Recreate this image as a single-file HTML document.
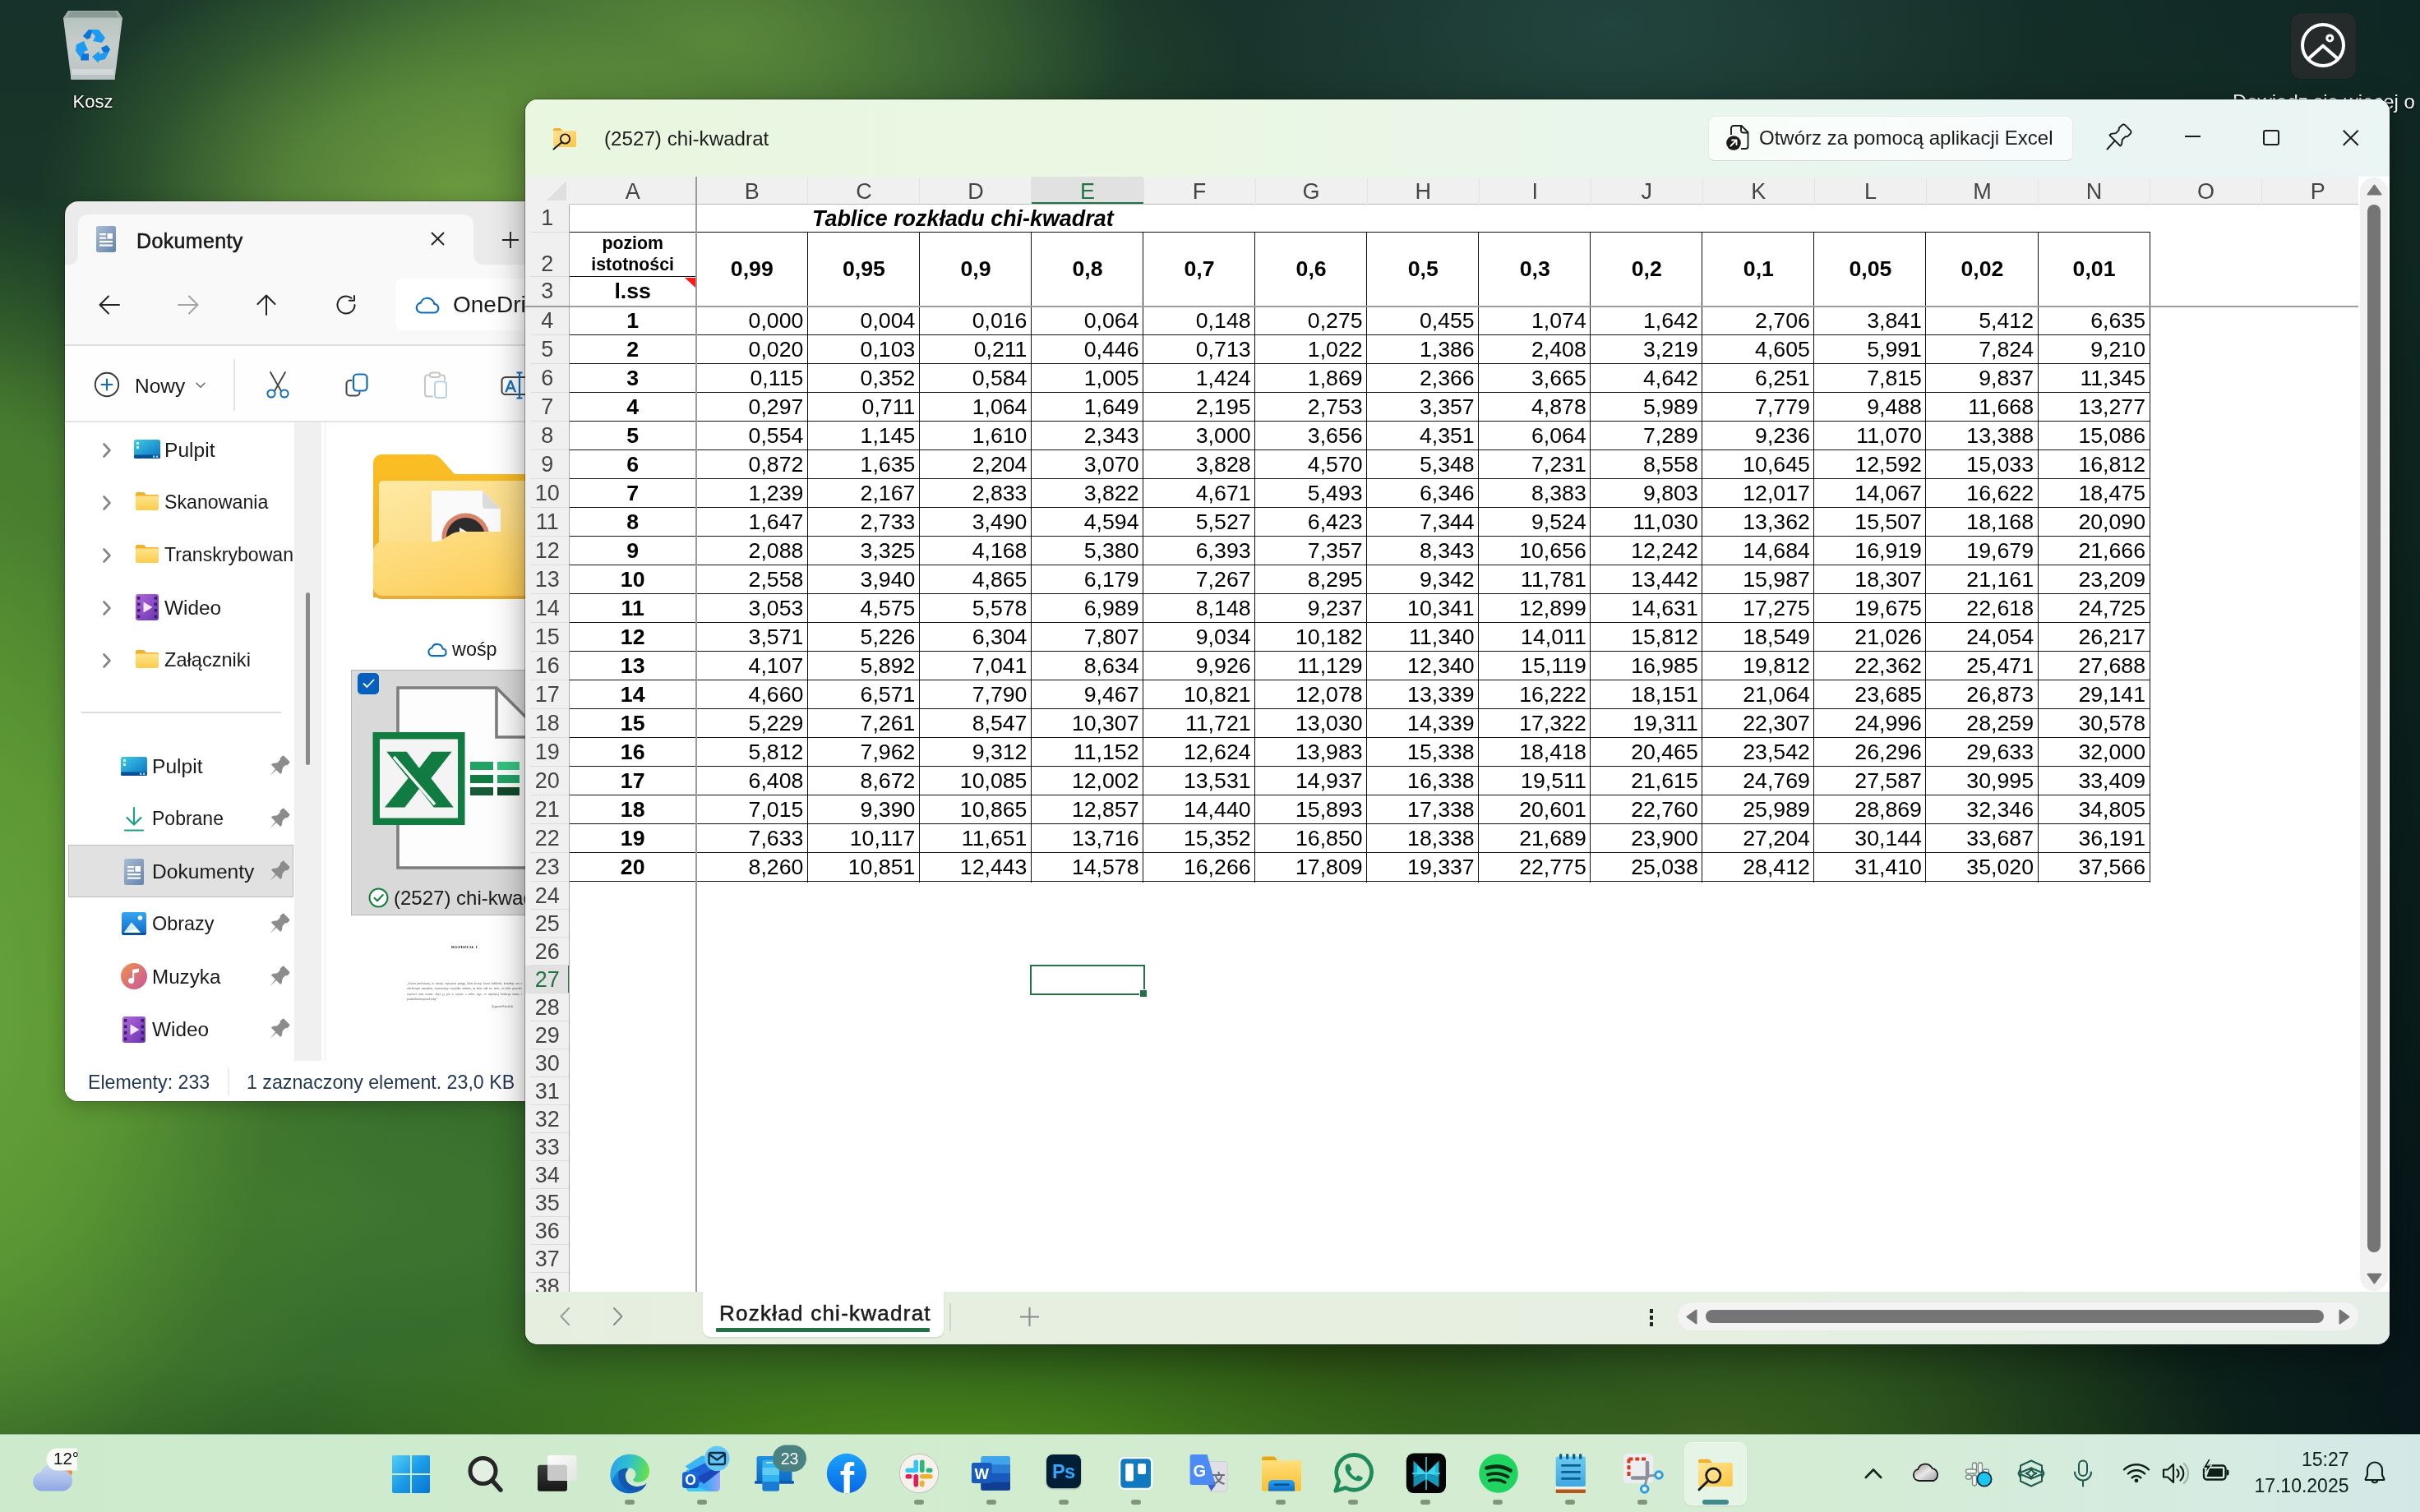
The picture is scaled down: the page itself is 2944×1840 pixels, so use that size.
<!DOCTYPE html>
<html lang="pl"><head><meta charset="utf-8"><title>Pulpit</title>
<style>
*{box-sizing:border-box}
html,body{margin:0;padding:0}
body{width:2944px;height:1840px;overflow:hidden;position:relative;font-family:"Liberation Sans",sans-serif;color:#1b1b1b;
background:
 radial-gradient(ellipse 520px 300px at 560px 230px,rgba(110,156,64,.95) 0%,rgba(100,148,60,.75) 40%,rgba(80,128,54,.3) 75%,rgba(70,118,52,0) 100%),
 radial-gradient(ellipse 500px 250px at 870px 50px,rgba(98,144,60,.85) 0%,rgba(84,130,56,.55) 50%,rgba(70,118,52,0) 100%),
 radial-gradient(ellipse 720px 400px at 800px 100px,rgba(74,122,54,.75) 0%,rgba(62,106,52,.45) 55%,rgba(50,90,50,0) 100%),
 radial-gradient(ellipse 520px 260px at 1960px 30px,rgba(48,88,84,.48) 0%,rgba(44,80,76,.25) 55%,rgba(40,70,66,0) 100%),
 radial-gradient(ellipse 900px 260px at 1150px 1800px,rgba(84,148,24,.95) 0%,rgba(70,128,26,.6) 50%,rgba(50,100,30,0) 100%),
 radial-gradient(ellipse 560px 820px at -80px 1230px,rgba(106,166,60,1) 0%,rgba(94,154,52,.9) 40%,rgba(70,124,44,.45) 75%,rgba(60,110,44,0) 100%),
 radial-gradient(ellipse 460px 560px at -70px 780px,rgba(90,148,54,.92) 0%,rgba(82,138,50,.8) 50%,rgba(70,120,46,.35) 80%,rgba(60,110,44,0) 100%),
 radial-gradient(ellipse 1000px 360px at 380px 1470px,rgba(64,122,50,.95) 0%,rgba(60,116,48,.75) 55%,rgba(50,100,40,0) 100%),
 radial-gradient(ellipse 330px 130px at 1590px 1660px,rgba(34,58,12,.7) 0%,rgba(34,58,12,0) 100%),
 radial-gradient(ellipse 640px 280px at 2080px 1760px,rgba(62,100,30,.85) 0%,rgba(50,84,28,.4) 60%,rgba(40,84,30,0) 100%),
 radial-gradient(ellipse 760px 1300px at 3000px 1560px,rgba(4,14,24,.85) 0%,rgba(4,16,24,.55) 50%,rgba(4,16,24,0) 100%),
 linear-gradient(90deg,rgba(0,0,0,0) 0%,rgba(0,0,0,0) 74%,rgba(8,28,30,.5) 100%),
 linear-gradient(180deg,#16322a 0%,#183826 25%,#23521f 70%,#1e4a1c 100%);
}
.abs{position:absolute}
svg{position:absolute;overflow:visible}
.ui{font-family:"Liberation Sans",sans-serif}
.st{font-size:24px;color:#191919}
.t{position:absolute;white-space:nowrap;line-height:1}
#root{position:absolute;left:0;top:0;width:2944px;height:1840px;will-change:transform}
</style></head><body><div id="root">
<!-- desktop icons -->
<svg style="left:70px;top:8px" width="90" height="96" viewBox="70 8 90 96">
 <defs><linearGradient id="bing" x1="0" y1="0" x2="0" y2="1"><stop offset="0" stop-color="#b3bfba"/><stop offset=".5" stop-color="#c6cecb"/><stop offset="1" stop-color="#bcc4c2"/></linearGradient></defs>
 <path d="M83 13 L143 13 L149 22 L139.5 96.5 L86.5 96.5 L77 22 Z" fill="url(#bing)"/>
 <path d="M83 13 L143 13 L149 22 L77 22 Z" fill="#9fada7"/>
 <path d="M86 14 L140 14 L144 21 L82 21 Z" fill="#8b9a94"/>
 <path d="M88 84 L138 84 L139.5 96.5 L86.5 96.5Z" fill="#d4d7da"/>
 <path d="M87 91 L139 91 L139.5 96.5 L86.5 96.5Z" fill="#bcc2c4"/>
 <g>
  <path d="M101 44 L108 36 L120 36 L128 46 L124 52 L113 50 L116 44 L112 40 L107 47 Z" fill="#1e9bf0"/>
  <path d="M101 44 L108 36 L112 37 L110 46 L106 48 Z" fill="#0d74d6"/>
  <path d="M93 54 L102 50 L107 61 L102 63 L108 73 L100 73 L92 62 Z" fill="#1e9bf0"/>
  <path d="M100 66 L108 65 L108 73.5 L98 73.5 Z" fill="#0d74d6"/>
  <path d="M130 55 L134 60 L128 72 L120 74 L120 77 L112 69 L121 62 L121 66 L126 64 Z" fill="#1e9bf0"/>
  <path d="M123 58 L130 55 L134 60 L131 64 L125 63 Z" fill="#0d74d6"/>
 </g>
</svg>
<div class="t" id="kosz" style="left:63px;top:112.500px;width:100px;text-align:center;font-size:22px;color:#fff;text-shadow:0 1px 3px rgba(0,0,0,.9),0 0 2px rgba(0,0,0,.8)">Kosz</div>

<div class="abs" style="left:2787px;top:15.500px;width:78.500px;height:80px;border-radius:12px;background:#252b2b;box-shadow:0 0 0 1px rgba(20,30,30,.5)"></div>
<svg style="left:2796px;top:25px" width="60" height="60" viewBox="0 0 60 60">
 <defs><clipPath id="spc"><circle cx="30" cy="30" r="25"/></clipPath></defs>
 <circle cx="30" cy="30" r="25" fill="none" stroke="#fff" stroke-width="4"/>
 <path d="M10 48.500 L30 30.700 L50 48.300" fill="none" stroke="#fff" stroke-width="4" stroke-linejoin="round" clip-path="url(#spc)"/>
 <circle cx="38.300" cy="21.400" r="3.500" fill="none" stroke="#fff" stroke-width="3"/>
</svg>
<div class="t" id="dow" style="left:2716px;top:111.500px;font-size:23.900px;color:#fff;text-shadow:0 1px 3px rgba(0,0,0,.9)">Dowiedz się więcej o</div>
<!-- explorer window -->
<div class="abs" id="explorer" style="left:79px;top:245px;width:720px;height:1095px;border-radius:16px;overflow:hidden;background:#ebebeb;box-shadow:0 0 0 1px rgba(0,0,0,.2),0 6px 22px rgba(0,0,0,.22)">
<div class="abs" style="left:-79px;top:-245px;width:2944px;height:1840px">
 <!-- tab + nav area -->
 <svg style="left:79px;top:261px" width="520" height="62" viewBox="79 261 520 62"><path d="M79 322 H83 Q95 322 95 308 V275 Q95 261 109 261 H562 Q576 261 576 275 V308 Q576 322 590 322 H599 V323 H79Z" fill="#f9f9f9"/></svg>
 <div class="abs" style="left:79px;top:322px;width:720px;height:98px;background:#f9f9f9"></div>
 <div class="abs" style="left:79px;top:419px;width:720px;height:2px;background:#dedede"></div>
 <div class="abs" style="left:79px;top:421px;width:720px;height:92px;background:#fefefe"></div>
 <div class="abs" style="left:79px;top:512px;width:720px;height:2px;background:#e2e2e2"></div>
 <div class="abs" style="left:79px;top:514px;width:720px;height:826px;background:#fff"></div>
 <!-- tab content -->
 <svg style="left:117px;top:275px" width="24" height="32" viewBox="0 0 24 32"><defs><linearGradient id="docg" x1="0" y1="0" x2="1" y2="1"><stop offset="0" stop-color="#a9bdd6"/><stop offset="1" stop-color="#6483ab"/></linearGradient></defs><rect width="24" height="32" rx="2.5" fill="url(#docg)"/><g fill="#fff"><rect x="4" y="9" width="8" height="2.2"/><rect x="4" y="13.5" width="8" height="2.2"/><rect x="13.5" y="9" width="6.5" height="6.7"/><rect x="4" y="18" width="16" height="2.2"/><rect x="4" y="22.5" width="16" height="2.2"/></g></svg>
 <div class="t" id="tabt" style="left:166px;top:280.500px;font-size:25px;letter-spacing:.350px;color:#191919;-webkit-text-stroke:.55px #191919">Dokumenty</div>
 <svg style="left:524px;top:282px" width="17" height="17" viewBox="0 0 17 17"><path d="M1 1L16 16M16 1L1 16" stroke="#222" stroke-width="1.9" fill="none"/></svg>
 <svg style="left:611px;top:282px" width="20" height="20" viewBox="0 0 20 20"><path d="M10 0V20M0 10H20" stroke="#222" stroke-width="1.9" fill="none"/></svg>
 <!-- nav buttons -->
 <svg style="left:120px;top:358px" width="26" height="26" viewBox="0 0 26 26"><path d="M25 13H2M12 2.5L1.5 13L12 23.5" stroke="#222" stroke-width="2" fill="none" stroke-linecap="round" stroke-linejoin="round"/></svg>
 <svg style="left:216px;top:358px" width="26" height="26" viewBox="0 0 26 26"><path d="M1 13H24M14 2.5L24.5 13L14 23.5" stroke="#a3a3a3" stroke-width="2" fill="none" stroke-linecap="round" stroke-linejoin="round"/></svg>
 <svg style="left:311px;top:358px" width="26" height="26" viewBox="0 0 26 26"><path d="M13 25V2M2.5 12L13 1.5L23.5 12" stroke="#222" stroke-width="2" fill="none" stroke-linecap="round" stroke-linejoin="round"/></svg>
 <svg style="left:408px;top:358px" width="26" height="26" viewBox="0 0 26 26"><path d="M23.5 13A10.5 10.5 0 1 1 19.5 4.8" stroke="#222" stroke-width="2" fill="none" stroke-linecap="round"/><path d="M14.5 4.6H20.6V-1.2" transform="translate(2.4,3.2)" stroke="#222" stroke-width="2" fill="none" stroke-linecap="round" stroke-linejoin="round"/></svg>
 <div class="abs" style="left:481px;top:339px;width:330px;height:63px;border-radius:9px;background:#fff"></div>
 <svg style="left:505px;top:360px" width="30" height="22" viewBox="0 0 30 22"><path d="M7.5 20.5a6 6 0 0 1 -.8 -11.9a8.6 8.6 0 0 1 16.6 1.2a5.4 5.4 0 0 1 .6 10.7Z" fill="none" stroke="#0f6cbd" stroke-width="2.2" stroke-linejoin="round"/></svg>
 <div class="t" id="oned" style="left:551px;top:357px;font-size:28px;color:#191919">OneDrive</div>
 <!-- toolbar -->
 <svg style="left:114px;top:452px" width="32" height="32" viewBox="0 0 32 32"><circle cx="16" cy="16" r="14.2" fill="none" stroke="#3b3b3b" stroke-width="1.9"/><path d="M16 9.5V22.5M9.5 16H22.5" stroke="#0f6cbd" stroke-width="2" stroke-linecap="round"/></svg>
 <div class="t" id="nowy" style="left:164px;top:458px;font-size:24.500px;color:#191919">Nowy</div>
 <svg style="left:238px;top:465px" width="12" height="8" viewBox="0 0 12 8"><path d="M1 1.2L6 6.2L11 1.2" stroke="#666" stroke-width="1.5" fill="none" stroke-linecap="round" stroke-linejoin="round"/></svg>
 <div class="abs" style="left:284px;top:437px;width:2px;height:63px;background:#e4e4e4"></div>
 <!-- cut -->
 <svg style="left:322px;top:452px" width="32" height="34" viewBox="0 0 32 34"><path d="M7 1L19.5 23M25 1L12.5 23" stroke="#444" stroke-width="1.9" fill="none" stroke-linecap="round"/><circle cx="8" cy="27" r="4.6" fill="none" stroke="#0f6cbd" stroke-width="2"/><circle cx="24" cy="27" r="4.6" fill="none" stroke="#0f6cbd" stroke-width="2"/></svg>
 <!-- copy -->
 <svg style="left:419px;top:454px" width="30" height="30" viewBox="0 0 30 30"><path d="M8.5 9H6.5a4 4 0 0 0 -4 4V23.5a4 4 0 0 0 4 4H14.5a4 4 0 0 0 4 -4V23" fill="none" stroke="#444" stroke-width="2" stroke-linecap="round"/><rect x="11" y="1.5" width="16.5" height="20" rx="4.2" fill="none" stroke="#0f6cbd" stroke-width="2.2"/></svg>
 <!-- paste (disabled) -->
 <svg style="left:515px;top:452px" width="30" height="34" viewBox="0 0 30 34"><path d="M12 30.5H5a3 3 0 0 1 -3 -3V7.5a3 3 0 0 1 3 -3H8M20 4.5h3a3 3 0 0 1 3 3V11" fill="none" stroke="#c6c6c6" stroke-width="2"/><rect x="8" y="1.5" width="12" height="5.5" rx="2.2" fill="none" stroke="#c6c6c6" stroke-width="2"/><rect x="14" y="12.5" width="14" height="19.5" rx="3" fill="#fff" stroke="#b7d3ec" stroke-width="2"/></svg>
 <!-- rename -->
 <svg style="left:609px;top:452px" width="40" height="34" viewBox="0 0 40 34"><rect x="1.5" y="7" width="36" height="21" rx="4.5" fill="none" stroke="#444" stroke-width="2"/><text x="5.500" y="25" font-family="Liberation Sans,sans-serif" font-size="20" fill="#0f6cbd" stroke="#0f6cbd" stroke-width=".5">A</text><path d="M19.500 1.500H26.500M19.500 32.500H26.500M23 1.500V32.500" stroke="#0f6cbd" stroke-width="2.2" fill="none"/><rect x="22" y="5" width="5" height="25" fill="#fff" opacity=".0"/></svg>
 <!-- symbols -->
 <svg width="0" height="0" style="left:0;top:0"><defs>
  <linearGradient id="gdesk" x1="0" y1="0" x2="1" y2="1"><stop offset="0" stop-color="#3ecbe6"/><stop offset="1" stop-color="#0d72c4"/></linearGradient>
  <linearGradient id="gfold" x1="0" y1="0" x2="0" y2="1"><stop offset="0" stop-color="#ffe48c"/><stop offset="1" stop-color="#fbcb4c"/></linearGradient>
  <linearGradient id="gvid" x1="0" y1="0" x2="1" y2="1"><stop offset="0" stop-color="#b06ad8"/><stop offset="1" stop-color="#6a32b4"/></linearGradient>
  <linearGradient id="gpic" x1="0" y1="0" x2="0" y2="1"><stop offset="0" stop-color="#35a6f2"/><stop offset="1" stop-color="#0f67c4"/></linearGradient>
  <linearGradient id="gmus" x1="0" y1="0" x2="1" y2="1"><stop offset="0" stop-color="#f0924e"/><stop offset="1" stop-color="#c8549c"/></linearGradient>
 </defs></svg>
 <!-- tree items -->
 <svg style="left:125px;top:539px" width="10" height="18" viewBox="0 0 10 18"><path d="M1.5 1.5L8.5 9L1.5 16.5" fill="none" stroke="#858585" stroke-width="2.6" stroke-linecap="round" stroke-linejoin="round"/></svg>
 <svg style="left:163px;top:535px" width="32" height="24" viewBox="0 0 32 24"><rect x="0" y="0" width="32" height="22" rx="2.5" fill="url(#gdesk)"/><rect x="0" y="18.5" width="32" height="4.5" rx="1.5" fill="#0b4f94"/><rect x="3" y="3" width="3" height="3" fill="#d9f6ff"/><rect x="3" y="8" width="3" height="3" fill="#d9f6ff"/><rect x="23" y="19.5" width="2.4" height="2.4" fill="#8fd6f4"/><rect x="27" y="19.5" width="2.4" height="2.4" fill="#8fd6f4"/></svg>
 <div class="t st" style="left:200px;top:536px;font-size:24.6px">Pulpit</div>
 <svg style="left:125px;top:603px" width="10" height="18" viewBox="0 0 10 18"><path d="M1.5 1.5L8.5 9L1.5 16.5" fill="none" stroke="#858585" stroke-width="2.6" stroke-linecap="round" stroke-linejoin="round"/></svg>
 <svg style="left:164px;top:598px" width="30" height="24" viewBox="0 0 30 24"><path d="M1 3a2 2 0 0 1 2 -2h8l3 3h13a2 2 0 0 1 2 2v3H1Z" fill="#f2b02c"/><rect x="1" y="5.5" width="28" height="17.5" rx="2" fill="url(#gfold)"/></svg>
 <div class="t st" style="left:200px;top:600px;font-size:23.2px">Skanowania</div>
 <svg style="left:125px;top:667px" width="10" height="18" viewBox="0 0 10 18"><path d="M1.5 1.5L8.5 9L1.5 16.5" fill="none" stroke="#858585" stroke-width="2.6" stroke-linecap="round" stroke-linejoin="round"/></svg>
 <svg style="left:164px;top:662px" width="30" height="24" viewBox="0 0 30 24"><path d="M1 3a2 2 0 0 1 2 -2h8l3 3h13a2 2 0 0 1 2 2v3H1Z" fill="#f2b02c"/><rect x="1" y="5.5" width="28" height="17.5" rx="2" fill="url(#gfold)"/></svg>
 <div class="t st" style="left:200px;top:664px;font-size:23.1px">Transkrybowane</div>
 <svg style="left:125px;top:731px" width="10" height="18" viewBox="0 0 10 18"><path d="M1.5 1.5L8.5 9L1.5 16.5" fill="none" stroke="#858585" stroke-width="2.6" stroke-linecap="round" stroke-linejoin="round"/></svg>
 <svg style="left:165px;top:723px" width="28" height="32" viewBox="0 0 28 32"><rect x="0" y="0" width="28" height="32" rx="3" fill="url(#gvid)"/><g fill="#3c1a78"><rect x="2" y="3" width="3.4" height="3.6"/><rect x="2" y="10.5" width="3.4" height="3.6"/><rect x="2" y="18" width="3.4" height="3.6"/><rect x="2" y="25.5" width="3.4" height="3.6"/><rect x="22.6" y="3" width="3.4" height="3.6"/><rect x="22.6" y="10.5" width="3.4" height="3.6"/><rect x="22.6" y="18" width="3.4" height="3.6"/><rect x="22.6" y="25.5" width="3.4" height="3.6"/></g><path d="M9.5 9.5L20.5 16L9.5 22.5Z" fill="#f3e6ff"/></svg>
 <div class="t st" style="left:200px;top:728px;font-size:24.4px">Wideo</div>
 <svg style="left:125px;top:795px" width="10" height="18" viewBox="0 0 10 18"><path d="M1.5 1.5L8.5 9L1.5 16.5" fill="none" stroke="#858585" stroke-width="2.6" stroke-linecap="round" stroke-linejoin="round"/></svg>
 <svg style="left:164px;top:790px" width="30" height="24" viewBox="0 0 30 24"><path d="M1 3a2 2 0 0 1 2 -2h8l3 3h13a2 2 0 0 1 2 2v3H1Z" fill="#f2b02c"/><rect x="1" y="5.5" width="28" height="17.5" rx="2" fill="url(#gfold)"/></svg>
 <div class="t st" style="left:200px;top:792px;font-size:23.6px">Załączniki</div>
 <div class="abs" style="left:99px;top:866px;width:243px;height:2px;background:#dcdcdc"></div>
 <!-- quick access -->
 <div class="abs" style="left:83px;top:1028px;width:274px;height:64px;background:#e1e1e1;border:1px solid #bdbdbd"></div>
 <svg style="left:147px;top:921px" width="32" height="24" viewBox="0 0 32 24"><rect x="0" y="0" width="32" height="22" rx="2.5" fill="url(#gdesk)"/><rect x="0" y="18.5" width="32" height="4.5" rx="1.5" fill="#0b4f94"/><rect x="3" y="3" width="3" height="3" fill="#d9f6ff"/><rect x="3" y="8" width="3" height="3" fill="#d9f6ff"/><rect x="23" y="19.5" width="2.4" height="2.4" fill="#8fd6f4"/><rect x="27" y="19.5" width="2.4" height="2.4" fill="#8fd6f4"/></svg>
 <div class="t st" style="left:185px;top:921px;font-size:24.6px">Pulpit</div>
 <svg style="left:151px;top:982px" width="24" height="30" viewBox="0 0 24 30"><path d="M12 1V21M3.5 13L12 21.5L20.5 13M1 28.5H23" fill="none" stroke="#1aa08c" stroke-width="2.2" stroke-linecap="round" stroke-linejoin="round"/></svg>
 <div class="t st" style="left:185px;top:985px;font-size:23px">Pobrane</div>
 <svg style="left:151px;top:1045px" width="24" height="32" viewBox="0 0 24 32"><rect width="24" height="32" rx="2.5" fill="url(#docg)"/><g fill="#fff"><rect x="4" y="9" width="8" height="2.2"/><rect x="4" y="13.5" width="8" height="2.2"/><rect x="13.5" y="9" width="6.5" height="6.7"/><rect x="4" y="18" width="16" height="2.2"/><rect x="4" y="22.5" width="16" height="2.2"/></g></svg>
 <div class="t st" style="left:185px;top:1049px;font-size:24.6px">Dokumenty</div>
 <svg style="left:148px;top:1110px" width="30" height="28" viewBox="0 0 30 28"><rect width="30" height="28" rx="3" fill="url(#gpic)"/><circle cx="22.5" cy="7" r="2.8" fill="#fff"/><path d="M2 26L12 12.5L24 26Z" fill="#fff"/><path d="M2 26L12 12.5L18 20Z" fill="#d5ecff"/><path d="M0 25h30v0a3 3 0 0 1 -3 3H3a3 3 0 0 1 -3 -3Z" fill="#0b4f94"/></svg>
 <div class="t st" style="left:185px;top:1113px;font-size:23.4px">Obrazy</div>
 <svg style="left:147px;top:1172px" width="32" height="32" viewBox="0 0 32 32"><circle cx="16" cy="16" r="16" fill="url(#gmus)"/><path d="M14 8L22 6.5V11L16.2 12.2V21.5a3.6 3.6 0 1 1 -2.2 -3.3Z" fill="#fff"/></svg>
 <div class="t st" style="left:185px;top:1177px;font-size:24.2px">Muzyka</div>
 <svg style="left:149px;top:1237px" width="28" height="32" viewBox="0 0 28 32"><rect x="0" y="0" width="28" height="32" rx="3" fill="url(#gvid)"/><g fill="#3c1a78"><rect x="2" y="3" width="3.4" height="3.6"/><rect x="2" y="10.5" width="3.4" height="3.6"/><rect x="2" y="18" width="3.4" height="3.6"/><rect x="2" y="25.5" width="3.4" height="3.6"/><rect x="22.6" y="3" width="3.4" height="3.6"/><rect x="22.6" y="10.5" width="3.4" height="3.6"/><rect x="22.6" y="18" width="3.4" height="3.6"/><rect x="22.6" y="25.5" width="3.4" height="3.6"/></g><path d="M9.5 9.5L20.5 16L9.5 22.5Z" fill="#f3e6ff"/></svg>
 <div class="t st" style="left:185px;top:1241px;font-size:24.4px">Wideo</div>
 <svg style="left:327px;top:919px" width="26" height="26" viewBox="0 0 26 26"><path d="M16.200 1.300a1.800 1.800 0 0 1 2.600 0l6 6a1.800 1.800 0 0 1 0 2.600l-2.400 2.400h-2.300l-3.400 3.400l-.900 5.600l-1.700 1.700l-5 -5L1.500 25L8 16.800l-5 -5l1.700 -1.700l5.600 -.900l3.400 -3.400V3.700Z" fill="#8c8c8c"/></svg>
 <svg style="left:327px;top:983px" width="26" height="26" viewBox="0 0 26 26"><path d="M16.200 1.300a1.800 1.800 0 0 1 2.600 0l6 6a1.800 1.800 0 0 1 0 2.600l-2.400 2.400h-2.300l-3.400 3.400l-.900 5.600l-1.700 1.700l-5 -5L1.500 25L8 16.800l-5 -5l1.700 -1.700l5.600 -.900l3.400 -3.400V3.700Z" fill="#8c8c8c"/></svg>
 <svg style="left:327px;top:1047px" width="26" height="26" viewBox="0 0 26 26"><path d="M16.200 1.300a1.800 1.800 0 0 1 2.600 0l6 6a1.800 1.800 0 0 1 0 2.600l-2.400 2.400h-2.300l-3.400 3.400l-.900 5.600l-1.700 1.700l-5 -5L1.500 25L8 16.800l-5 -5l1.700 -1.700l5.600 -.900l3.400 -3.400V3.700Z" fill="#8c8c8c"/></svg>
 <svg style="left:327px;top:1111px" width="26" height="26" viewBox="0 0 26 26"><path d="M16.200 1.300a1.800 1.800 0 0 1 2.600 0l6 6a1.800 1.800 0 0 1 0 2.600l-2.400 2.400h-2.300l-3.400 3.400l-.900 5.600l-1.700 1.700l-5 -5L1.500 25L8 16.800l-5 -5l1.700 -1.700l5.600 -.900l3.400 -3.400V3.700Z" fill="#8c8c8c"/></svg>
 <svg style="left:327px;top:1175px" width="26" height="26" viewBox="0 0 26 26"><path d="M16.200 1.300a1.800 1.800 0 0 1 2.600 0l6 6a1.800 1.800 0 0 1 0 2.600l-2.400 2.400h-2.300l-3.400 3.400l-.900 5.600l-1.700 1.700l-5 -5L1.500 25L8 16.800l-5 -5l1.700 -1.700l5.600 -.900l3.400 -3.400V3.700Z" fill="#8c8c8c"/></svg>
 <svg style="left:327px;top:1239px" width="26" height="26" viewBox="0 0 26 26"><path d="M16.200 1.300a1.800 1.800 0 0 1 2.600 0l6 6a1.800 1.800 0 0 1 0 2.600l-2.400 2.400h-2.300l-3.400 3.400l-.900 5.600l-1.700 1.700l-5 -5L1.500 25L8 16.800l-5 -5l1.700 -1.700l5.600 -.900l3.400 -3.400V3.700Z" fill="#8c8c8c"/></svg>
 <!-- sidebar strip -->
 <div class="abs" style="left:358px;top:514px;width:33px;height:777px;background:#f0f0f0"></div>
 <div class="abs" style="left:395px;top:514px;width:1px;height:777px;background:#ececec"></div>
 <div class="abs" style="left:372px;top:721px;width:5px;height:210px;border-radius:3px;background:#8b8b8b"></div>
 <!-- content: big folder -->
 <svg style="left:454px;top:552px" width="260" height="180" viewBox="454 552 260 180">
  <defs>
   <linearGradient id="bf1" x1="0" y1="0" x2="0" y2="1"><stop offset="0" stop-color="#fbbf24"/><stop offset="1" stop-color="#eaa928"/></linearGradient>
   <linearGradient id="bf2" x1="0" y1="0" x2="1" y2="1"><stop offset="0" stop-color="#ffe9a4"/><stop offset="1" stop-color="#f7cd62"/></linearGradient>
   <linearGradient id="bf3" x1="0" y1="0" x2="1" y2="1"><stop offset="0" stop-color="#ffe08a"/><stop offset="1" stop-color="#fbc94c"/></linearGradient>
   <linearGradient id="bfp" x1="0" y1="0" x2="1" y2="1"><stop offset="0" stop-color="#8a4b3a"/><stop offset="1" stop-color="#2a2a2a"/></linearGradient>
  </defs>
  <path d="M454 563 a10 10 0 0 1 10 -10 h60 q8 0 13 6 l16 18 h160 v150 h-259 Z" fill="url(#bf1)"/>
  <rect x="461" y="585" width="260" height="130" rx="5" fill="url(#bf2)"/>
  <path d="M525 597 h62 l22 22 v60 h-84 Z" fill="#fafafa"/>
  <path d="M587 597 l22 22 h-18 a4 4 0 0 1 -4 -4 Z" fill="#dcdcdc"/>
  <circle cx="566.500" cy="653.500" r="29" fill="#d9826a"/><circle cx="566.500" cy="653.500" r="23.500" fill="#2c2c2c"/>
  <path d="M559 642 L577 652 L559 662Z" fill="#eee"/>
  <path d="M454 671 a12 12 0 0 1 12 -12 h62 q8 0 13 -4 l8 -5 q5 -3 12 -3 h160 v82 h-257 a10 10 0 0 1 -10 -10 Z" fill="url(#bf3)"/>
  <path d="M454 716 v3 a10 10 0 0 0 10 10 h257 v-4 h-255 a11 11 0 0 1 -12 -9Z" fill="#e8ad35"/>
 </svg>
 <svg style="left:520px;top:781px" width="24" height="19" viewBox="0 0 30 22"><path d="M7.500 20.500a6 6 0 0 1 -.8 -11.900a8.600 8.600 0 0 1 16.600 1.200a5.400 5.400 0 0 1 .6 10.700Z" fill="none" stroke="#0f6cbd" stroke-width="2.600" stroke-linejoin="round"/></svg>
 <div class="t st" id="wosp" style="left:550px;top:779px;font-size:23.400px">wośp</div>
 <!-- selected item -->
 <div class="abs" style="left:427px;top:815px;width:320px;height:299px;background:#d9d9d9;border:1px solid #b4b4b4"></div>
 <div class="abs" style="left:435px;top:819px;width:26px;height:26px;border-radius:5px;background:#0560c0"></div>
 <svg style="left:441px;top:826px" width="15" height="12" viewBox="0 0 15 12"><path d="M1.500 6L5.500 10L13.500 1.500" fill="none" stroke="#fff" stroke-width="1.800" stroke-linecap="round" stroke-linejoin="round"/></svg>
 <svg style="left:450px;top:833px" width="260" height="230" viewBox="450 833 260 230">
  <path d="M484 837 h120 l60 60 v159 h-180 Z" fill="#fdfdfd" stroke="#7d7d7d" stroke-width="3.600"/>
  <path d="M604 837 v60 h60" fill="none" stroke="#7d7d7d" stroke-width="3.600"/>
  <rect x="453.500" y="891" width="112" height="113" fill="#107c41"/>
  <rect x="462" y="899.500" width="95" height="96" fill="#f4f4f4"/>
  <text transform="translate(510 979.500) scale(1.240 1)" text-anchor="middle" font-family="Liberation Sans,sans-serif" font-weight="bold" font-size="90" fill="#107c41" stroke="#107c41" stroke-width="5" stroke-linejoin="miter">X</text>
  <path d="M479 921 l50 58" stroke="#f4f4f4" stroke-width="3.500" fill="none"/>
  <g><rect x="572" y="927" width="28" height="10" fill="#21a366"/><rect x="605" y="927" width="27" height="10" fill="#33c481"/><rect x="572" y="943" width="28" height="10" fill="#107c41"/><rect x="605" y="943" width="27" height="10" fill="#21a366"/><rect x="572" y="958" width="28" height="10" fill="#185c37"/><rect x="605" y="958" width="27" height="10" fill="#134a2c"/></g>
 </svg>
 <svg style="left:448px;top:1080px" width="25" height="25" viewBox="0 0 25 25"><circle cx="12.500" cy="12.500" r="11" fill="#fff" stroke="#15803d" stroke-width="2"/><path d="M7.500 12.800L11 16.300L17.800 9" fill="none" stroke="#15803d" stroke-width="2" stroke-linecap="round" stroke-linejoin="round"/></svg>
 <div class="t st" id="fname" style="left:479px;top:1081px">(2527) chi-kwadrat</div>
 <!-- doc thumbnail -->
 <div class="t" style="left:549px;top:1150px;font-family:'Liberation Serif',serif;font-size:5px;font-weight:bold;color:#222;letter-spacing:.2px">ROZDZIAŁ I</div>
 <div class="abs" style="left:495px;top:1194px;width:140px;font-family:'Liberation Serif',serif;font-size:3.400px;line-height:6.300px;color:#555;text-align:justify;white-space:normal">„Jestem przekonany, że istnieje najwyższa potęga, która kieruje losem ludzkości, kształtuje nas z określonym zamysłem, wyznaczając wszystkie zadania, na które nikt nie może, na które przyszło wywrzeć nasz rozum. Abyś ją jest w wyższe z siebie tego, co najwięcej boskiego mamy i postawiłaniem przed sobą”</div>
 <div class="t" style="left:598px;top:1224px;font-family:'Liberation Serif',serif;font-size:3.400px;color:#555">Zygmunt Krasiński</div>
 <!-- status bar -->
 <div class="abs" style="left:79px;top:1291px;width:720px;height:49px;background:#fff"></div>
 <div class="t" id="st1" style="left:107px;top:1306px;font-size:23.200px;color:#1f3550">Elementy: 233</div>
 <div class="abs" style="left:277px;top:1299px;width:2px;height:34px;background:#ececec"></div>
 <div class="t" id="st2" style="left:300px;top:1306px;font-size:23.200px;color:#1f3550">1 zaznaczony element. 23,0 KB</div>
</div></div>

<!-- sheet preview window -->
<div class="abs" id="peek" style="left:639px;top:120.5px;width:2268px;height:1515.5px;border-radius:15px;overflow:hidden;background:#fff;box-shadow:0 0 0 1px rgba(0,0,0,.3),0 3px 12px rgba(0,0,0,.1),0 14px 40px 4px rgba(0,0,0,.3)">
<div class="abs" style="left:-639px;top:-120.5px;width:2944px;height:1840px">
<div class="abs" style="left:639px;top:120.5px;width:2268px;height:94.5px;background:linear-gradient(90deg,#e9f7e1 0%,#e9f7e3 35%,#e9f6ec 60%,#e9f5f2 80%,#eaf5f4 100%)"></div>
<svg style="left:671px;top:155px" width="32" height="28" viewBox="0 0 32 28"><defs><linearGradient id="pkf" x1="0" y1="0" x2="1" y2="1"><stop offset="0" stop-color="#ffe394"/><stop offset="1" stop-color="#fbc53e"/></linearGradient></defs><path d="M2 3a2 2 0 0 1 2 -2h6.500l3 3.200H2Z" fill="#f2b02c"/><path d="M2 4.200h26a2 2 0 0 1 2 2v15.800a2 2 0 0 1 -2 2H4a2 2 0 0 1 -2 -2Z" fill="url(#pkf)"/><circle cx="16.500" cy="14" r="5.600" fill="#ffe9a8" fill-opacity=".5" stroke="#1a1a1a" stroke-width="1.900"/><path d="M12.600 18L2.500 26.500" stroke="#1a1a1a" stroke-width="2.100" stroke-linecap="round"/></svg>
<div class="t" id="ptitle" style="left:735px;top:157px;font-size:24.200px;color:#1b1b1b">(2527) chi-kwadrat</div>
<div class="abs" style="left:2077.500px;top:140.500px;width:444px;height:55px;border-radius:8px;background:rgba(255,255,255,.72);border:1px solid rgba(0,0,0,.07);border-bottom-color:rgba(0,0,0,.16)"></div>
<svg style="left:2099px;top:151px" width="30" height="32" viewBox="0 0 30 32"><path d="M7 13V5a3 3 0 0 1 3 -3h9.500l8 8V27a3 3 0 0 1 -3 3H19" fill="none" stroke="#1b1b1b" stroke-width="1.900" stroke-linejoin="round"/><path d="M19 2.500V8a2.500 2.500 0 0 0 2.500 2.500H27.500" fill="none" stroke="#1b1b1b" stroke-width="1.900"/><circle cx="10" cy="23" r="8.800" fill="#1b1b1b"/><path d="M6.500 26.500L13.300 19.700M8 19.500H13.500V25" fill="none" stroke="#fff" stroke-width="1.900" stroke-linecap="round" stroke-linejoin="round"/></svg>
<div class="t" id="openw" style="left:2140px;top:156.400px;font-size:24px;color:#1b1b1b">Otwórz za pomocą aplikacji Excel</div>
<svg style="left:2562px;top:150px" width="33" height="34" viewBox="0 0 33 34"><path d="M19.500 2.200a2.600 2.600 0 0 1 3.700 0l6.600 6.600a2.600 2.600 0 0 1 0 3.700l-3.100 3.100a2 2 0 0 1 -1.400 .6h-1.700l-3.800 3.800l-.8 5.800l-1.700 1.700L4.400 14.600l1.700 -1.700l5.800 -.8l3.800 -3.800V6.600a2 2 0 0 1 .6 -1.400Z" fill="none" stroke="#1b1b1b" stroke-width="1.900" stroke-linejoin="round"/><path d="M10.900 21.100L1.500 31.500" stroke="#1b1b1b" stroke-width="1.900" stroke-linecap="round"/></svg>
<div class="abs" style="left:2657.500px;top:165px;width:19.500px;height:2px;background:#1b1b1b"></div>
<div class="abs" style="left:2753px;top:157.500px;width:20px;height:19.500px;border:2px solid #1b1b1b;border-radius:3px"></div>
<svg style="left:2849.500px;top:157.500px" width="19.500" height="19.500" viewBox="0 0 19.500 19.500"><path d="M.8 .8L18.700 18.700M18.700 .8L.8 18.700" stroke="#1b1b1b" stroke-width="2" fill="none"/></svg>
<div class="abs" style="left:639px;top:215px;width:2229.5px;height:33.5px;background:#f0f0f0"></div>
<div class="abs" style="left:639px;top:248.5px;width:53.5px;height:1323.0px;background:#f0f0f0"></div>
<svg style="left:663.500px;top:219px" width="26" height="26" viewBox="0 0 26 26"><path d="M25 1V25H1Z" fill="#dfdfdf"/></svg>
<div class="abs" style="left:1254.98px;top:215px;width:136.06px;height:33.5px;background:#e1e1e1;border-bottom:3px solid #217346"></div>
<div class="abs" style="left:692.5px;top:247.5px;width:2176.0px;height:1.500px;background:#b9b9b9"></div>
<div class="t ch" style="left:692.5px;width:154.29999999999995px;top:219.8px">A</div>
<div class="t ch" style="left:846.8px;width:136.06px;top:219.8px;color:#444">B</div>
<div class="t ch" style="left:982.8599999999999px;width:136.06px;top:219.8px;color:#444">C</div>
<div class="abs" style="left:982.3599999999999px;top:217px;width:1px;height:31.5px;background:#e2e2e2"></div>
<div class="t ch" style="left:1118.92px;width:136.06px;top:219.8px;color:#444">D</div>
<div class="abs" style="left:1118.42px;top:217px;width:1px;height:31.5px;background:#e2e2e2"></div>
<div class="t ch" style="left:1254.98px;width:136.06px;top:219.8px;color:#217346">E</div>
<div class="abs" style="left:1254.48px;top:217px;width:1px;height:31.5px;background:#e2e2e2"></div>
<div class="t ch" style="left:1391.04px;width:136.06px;top:219.8px;color:#444">F</div>
<div class="abs" style="left:1390.54px;top:217px;width:1px;height:31.5px;background:#e2e2e2"></div>
<div class="t ch" style="left:1527.1px;width:136.06px;top:219.8px;color:#444">G</div>
<div class="abs" style="left:1526.6px;top:217px;width:1px;height:31.5px;background:#e2e2e2"></div>
<div class="t ch" style="left:1663.1599999999999px;width:136.06px;top:219.8px;color:#444">H</div>
<div class="abs" style="left:1662.6599999999999px;top:217px;width:1px;height:31.5px;background:#e2e2e2"></div>
<div class="t ch" style="left:1799.22px;width:136.06px;top:219.8px;color:#444">I</div>
<div class="abs" style="left:1798.72px;top:217px;width:1px;height:31.5px;background:#e2e2e2"></div>
<div class="t ch" style="left:1935.28px;width:136.06px;top:219.8px;color:#444">J</div>
<div class="abs" style="left:1934.78px;top:217px;width:1px;height:31.5px;background:#e2e2e2"></div>
<div class="t ch" style="left:2071.34px;width:136.06px;top:219.8px;color:#444">K</div>
<div class="abs" style="left:2070.84px;top:217px;width:1px;height:31.5px;background:#e2e2e2"></div>
<div class="t ch" style="left:2207.3999999999996px;width:136.06px;top:219.8px;color:#444">L</div>
<div class="abs" style="left:2206.8999999999996px;top:217px;width:1px;height:31.5px;background:#e2e2e2"></div>
<div class="t ch" style="left:2343.46px;width:136.06px;top:219.8px;color:#444">M</div>
<div class="abs" style="left:2342.96px;top:217px;width:1px;height:31.5px;background:#e2e2e2"></div>
<div class="t ch" style="left:2479.52px;width:136.06px;top:219.8px;color:#444">N</div>
<div class="abs" style="left:2479.02px;top:217px;width:1px;height:31.5px;background:#e2e2e2"></div>
<div class="t ch" style="left:2615.58px;width:136.06px;top:219.8px;color:#444">O</div>
<div class="abs" style="left:2615.08px;top:217px;width:1px;height:31.5px;background:#e2e2e2"></div>
<div class="t ch" style="left:2751.6400000000003px;width:136.06px;top:219.8px;color:#444">P</div>
<div class="abs" style="left:2751.1400000000003px;top:217px;width:1px;height:31.5px;background:#e2e2e2"></div>
<div class="t rh" style="left:639px;width:53.5px;top:252.1px;color:#444">1</div>
<div class="abs" style="left:645px;top:282px;width:47.5px;height:1px;background:#dcdcdc"></div>
<div class="t rh" style="left:639px;width:53.5px;top:307.7px;color:#444">2</div>
<div class="abs" style="left:645px;top:336px;width:47.5px;height:1px;background:#dcdcdc"></div>
<div class="t rh" style="left:639px;width:53.5px;top:340.6px;color:#444">3</div>
<div class="abs" style="left:645px;top:372px;width:47.5px;height:1px;background:#dcdcdc"></div>
<div class="t rh" style="left:639px;width:53.5px;top:376.6px;color:#444">4</div>
<div class="abs" style="left:645px;top:407px;width:47.5px;height:1px;background:#dcdcdc"></div>
<div class="t rh" style="left:639px;width:53.5px;top:411.6px;color:#444">5</div>
<div class="abs" style="left:645px;top:442px;width:47.5px;height:1px;background:#dcdcdc"></div>
<div class="t rh" style="left:639px;width:53.5px;top:446.6px;color:#444">6</div>
<div class="abs" style="left:645px;top:477px;width:47.5px;height:1px;background:#dcdcdc"></div>
<div class="t rh" style="left:639px;width:53.5px;top:481.6px;color:#444">7</div>
<div class="abs" style="left:645px;top:512px;width:47.5px;height:1px;background:#dcdcdc"></div>
<div class="t rh" style="left:639px;width:53.5px;top:516.6px;color:#444">8</div>
<div class="abs" style="left:645px;top:547px;width:47.5px;height:1px;background:#dcdcdc"></div>
<div class="t rh" style="left:639px;width:53.5px;top:551.6px;color:#444">9</div>
<div class="abs" style="left:645px;top:582px;width:47.5px;height:1px;background:#dcdcdc"></div>
<div class="t rh" style="left:639px;width:53.5px;top:586.6px;color:#444">10</div>
<div class="abs" style="left:645px;top:617px;width:47.5px;height:1px;background:#dcdcdc"></div>
<div class="t rh" style="left:639px;width:53.5px;top:621.6px;color:#444">11</div>
<div class="abs" style="left:645px;top:652px;width:47.5px;height:1px;background:#dcdcdc"></div>
<div class="t rh" style="left:639px;width:53.5px;top:656.6px;color:#444">12</div>
<div class="abs" style="left:645px;top:687px;width:47.5px;height:1px;background:#dcdcdc"></div>
<div class="t rh" style="left:639px;width:53.5px;top:691.6px;color:#444">13</div>
<div class="abs" style="left:645px;top:722px;width:47.5px;height:1px;background:#dcdcdc"></div>
<div class="t rh" style="left:639px;width:53.5px;top:726.6px;color:#444">14</div>
<div class="abs" style="left:645px;top:757px;width:47.5px;height:1px;background:#dcdcdc"></div>
<div class="t rh" style="left:639px;width:53.5px;top:761.6px;color:#444">15</div>
<div class="abs" style="left:645px;top:792px;width:47.5px;height:1px;background:#dcdcdc"></div>
<div class="t rh" style="left:639px;width:53.5px;top:796.6px;color:#444">16</div>
<div class="abs" style="left:645px;top:827px;width:47.5px;height:1px;background:#dcdcdc"></div>
<div class="t rh" style="left:639px;width:53.5px;top:831.6px;color:#444">17</div>
<div class="abs" style="left:645px;top:862px;width:47.5px;height:1px;background:#dcdcdc"></div>
<div class="t rh" style="left:639px;width:53.5px;top:866.6px;color:#444">18</div>
<div class="abs" style="left:645px;top:897px;width:47.5px;height:1px;background:#dcdcdc"></div>
<div class="t rh" style="left:639px;width:53.5px;top:901.6px;color:#444">19</div>
<div class="abs" style="left:645px;top:932px;width:47.5px;height:1px;background:#dcdcdc"></div>
<div class="t rh" style="left:639px;width:53.5px;top:936.6px;color:#444">20</div>
<div class="abs" style="left:645px;top:967px;width:47.5px;height:1px;background:#dcdcdc"></div>
<div class="t rh" style="left:639px;width:53.5px;top:971.6px;color:#444">21</div>
<div class="abs" style="left:645px;top:1002px;width:47.5px;height:1px;background:#dcdcdc"></div>
<div class="t rh" style="left:639px;width:53.5px;top:1006.6px;color:#444">22</div>
<div class="abs" style="left:645px;top:1037px;width:47.5px;height:1px;background:#dcdcdc"></div>
<div class="t rh" style="left:639px;width:53.5px;top:1041.6px;color:#444">23</div>
<div class="abs" style="left:645px;top:1072px;width:47.5px;height:1px;background:#dcdcdc"></div>
<div class="t rh" style="left:639px;width:53.5px;top:1076.6px;color:#444">24</div>
<div class="abs" style="left:645px;top:1106px;width:47.5px;height:1px;background:#dcdcdc"></div>
<div class="t rh" style="left:639px;width:53.5px;top:1110.6px;color:#444">25</div>
<div class="abs" style="left:645px;top:1140px;width:47.5px;height:1px;background:#dcdcdc"></div>
<div class="t rh" style="left:639px;width:53.5px;top:1144.6px;color:#444">26</div>
<div class="abs" style="left:645px;top:1174px;width:47.5px;height:1px;background:#dcdcdc"></div>
<div class="abs" style="left:639px;top:1175.0px;width:53.5px;height:34.0px;background:#e1e1e1;border-right:2px solid #217346"></div>
<div class="t rh" style="left:639px;width:53.5px;top:1178.6px;color:#217346">27</div>
<div class="abs" style="left:645px;top:1208px;width:47.5px;height:1px;background:#dcdcdc"></div>
<div class="t rh" style="left:639px;width:53.5px;top:1212.6px;color:#444">28</div>
<div class="abs" style="left:645px;top:1242px;width:47.5px;height:1px;background:#dcdcdc"></div>
<div class="t rh" style="left:639px;width:53.5px;top:1246.6px;color:#444">29</div>
<div class="abs" style="left:645px;top:1276px;width:47.5px;height:1px;background:#dcdcdc"></div>
<div class="t rh" style="left:639px;width:53.5px;top:1280.6px;color:#444">30</div>
<div class="abs" style="left:645px;top:1310px;width:47.5px;height:1px;background:#dcdcdc"></div>
<div class="t rh" style="left:639px;width:53.5px;top:1314.6px;color:#444">31</div>
<div class="abs" style="left:645px;top:1344px;width:47.5px;height:1px;background:#dcdcdc"></div>
<div class="t rh" style="left:639px;width:53.5px;top:1348.6px;color:#444">32</div>
<div class="abs" style="left:645px;top:1378px;width:47.5px;height:1px;background:#dcdcdc"></div>
<div class="t rh" style="left:639px;width:53.5px;top:1382.6px;color:#444">33</div>
<div class="abs" style="left:645px;top:1412px;width:47.5px;height:1px;background:#dcdcdc"></div>
<div class="t rh" style="left:639px;width:53.5px;top:1416.6px;color:#444">34</div>
<div class="abs" style="left:645px;top:1446px;width:47.5px;height:1px;background:#dcdcdc"></div>
<div class="t rh" style="left:639px;width:53.5px;top:1450.6px;color:#444">35</div>
<div class="abs" style="left:645px;top:1480px;width:47.5px;height:1px;background:#dcdcdc"></div>
<div class="t rh" style="left:639px;width:53.5px;top:1484.6px;color:#444">36</div>
<div class="abs" style="left:645px;top:1514px;width:47.5px;height:1px;background:#dcdcdc"></div>
<div class="t rh" style="left:639px;width:53.5px;top:1518.6px;color:#444">37</div>
<div class="abs" style="left:645px;top:1548px;width:47.5px;height:1px;background:#dcdcdc"></div>
<div class="t rh" style="left:639px;width:53.5px;top:1552.6px;color:#444">38</div>
<div class="abs" style="left:645px;top:1582px;width:47.5px;height:1px;background:#dcdcdc"></div>
<div class="abs" style="left:691.9px;top:248.5px;width:1.400px;height:1323.0px;background:#a9a9a9"></div>
<div class="abs" style="left:692.5px;top:282px;width:1923.1px;height:1px;background:#111"></div>
<div class="abs" style="left:692.5px;top:336px;width:154.3px;height:1px;background:#111"></div>
<div class="abs" style="left:692.5px;top:407px;width:1923.1px;height:1px;background:#111"></div>
<div class="abs" style="left:692.5px;top:442px;width:1923.1px;height:1px;background:#111"></div>
<div class="abs" style="left:692.5px;top:477px;width:1923.1px;height:1px;background:#111"></div>
<div class="abs" style="left:692.5px;top:512px;width:1923.1px;height:1px;background:#111"></div>
<div class="abs" style="left:692.5px;top:547px;width:1923.1px;height:1px;background:#111"></div>
<div class="abs" style="left:692.5px;top:582px;width:1923.1px;height:1px;background:#111"></div>
<div class="abs" style="left:692.5px;top:617px;width:1923.1px;height:1px;background:#111"></div>
<div class="abs" style="left:692.5px;top:652px;width:1923.1px;height:1px;background:#111"></div>
<div class="abs" style="left:692.5px;top:687px;width:1923.1px;height:1px;background:#111"></div>
<div class="abs" style="left:692.5px;top:722px;width:1923.1px;height:1px;background:#111"></div>
<div class="abs" style="left:692.5px;top:757px;width:1923.1px;height:1px;background:#111"></div>
<div class="abs" style="left:692.5px;top:792px;width:1923.1px;height:1px;background:#111"></div>
<div class="abs" style="left:692.5px;top:827px;width:1923.1px;height:1px;background:#111"></div>
<div class="abs" style="left:692.5px;top:862px;width:1923.1px;height:1px;background:#111"></div>
<div class="abs" style="left:692.5px;top:897px;width:1923.1px;height:1px;background:#111"></div>
<div class="abs" style="left:692.5px;top:932px;width:1923.1px;height:1px;background:#111"></div>
<div class="abs" style="left:692.5px;top:967px;width:1923.1px;height:1px;background:#111"></div>
<div class="abs" style="left:692.5px;top:1002px;width:1923.1px;height:1px;background:#111"></div>
<div class="abs" style="left:692.5px;top:1037px;width:1923.1px;height:1px;background:#111"></div>
<div class="abs" style="left:692.5px;top:1072px;width:1923.1px;height:1px;background:#111"></div>
<div class="abs" style="left:982px;top:282px;width:1px;height:792px;background:#111"></div>
<div class="abs" style="left:1118px;top:282px;width:1px;height:792px;background:#111"></div>
<div class="abs" style="left:1254px;top:282px;width:1px;height:792px;background:#111"></div>
<div class="abs" style="left:1390px;top:282px;width:1px;height:792px;background:#111"></div>
<div class="abs" style="left:1526px;top:282px;width:1px;height:792px;background:#111"></div>
<div class="abs" style="left:1662px;top:282px;width:1px;height:792px;background:#111"></div>
<div class="abs" style="left:1798px;top:282px;width:1px;height:792px;background:#111"></div>
<div class="abs" style="left:1934px;top:282px;width:1px;height:792px;background:#111"></div>
<div class="abs" style="left:2070px;top:282px;width:1px;height:792px;background:#111"></div>
<div class="abs" style="left:2206px;top:282px;width:1px;height:792px;background:#111"></div>
<div class="abs" style="left:2342px;top:282px;width:1px;height:792px;background:#111"></div>
<div class="abs" style="left:2479px;top:282px;width:1px;height:792px;background:#111"></div>
<div class="abs" style="left:2615px;top:282px;width:1px;height:792px;background:#111"></div>
<div class="abs" style="left:692.5px;top:248px;width:154.3px;height:1px;background:#bdbdbd"></div>
<div class="abs" style="left:845.8px;top:215px;width:1.800px;height:1356.5px;background:#9c9c9c"></div>
<div class="abs" style="left:639px;top:371.8px;width:2229.5px;height:1.800px;background:#9c9c9c"></div>
<svg style="left:832.8px;top:337.5px" width="13" height="12" viewBox="0 0 13 12"><path d="M0 0H13V12Z" fill="#ff1a1a"/></svg>
<div class="t" id="ttl" style="left:988px;top:252.7px;font-size:26.900px;font-weight:bold;font-style:italic;color:#000">Tablice rozkładu chi-kwadrat</div>
<div class="t" style="left:692.5px;width:154.29999999999995px;top:282.7px;text-align:center;font-size:21.300px;line-height:26.500px;font-weight:bold;color:#000;white-space:normal">poziom<br>istotności</div>
<div class="t" style="left:692.5px;width:154.29999999999995px;top:341.0px;text-align:center;font-size:26.700px;font-weight:bold;color:#000">l.ss</div>
<div class="t hb" style="left:846.8px;width:136.06px;top:313.95px">0,99</div>
<div class="t hb" style="left:982.8599999999999px;width:136.06px;top:313.95px">0,95</div>
<div class="t hb" style="left:1118.92px;width:136.06px;top:313.95px">0,9</div>
<div class="t hb" style="left:1254.98px;width:136.06px;top:313.95px">0,8</div>
<div class="t hb" style="left:1391.04px;width:136.06px;top:313.95px">0,7</div>
<div class="t hb" style="left:1527.1px;width:136.06px;top:313.95px">0,6</div>
<div class="t hb" style="left:1663.1599999999999px;width:136.06px;top:313.95px">0,5</div>
<div class="t hb" style="left:1799.22px;width:136.06px;top:313.95px">0,3</div>
<div class="t hb" style="left:1935.28px;width:136.06px;top:313.95px">0,2</div>
<div class="t hb" style="left:2071.34px;width:136.06px;top:313.95px">0,1</div>
<div class="t hb" style="left:2207.3999999999996px;width:136.06px;top:313.95px">0,05</div>
<div class="t hb" style="left:2343.46px;width:136.06px;top:313.95px">0,02</div>
<div class="t hb" style="left:2479.52px;width:136.06px;top:313.95px">0,01</div>
<div class="t hb" style="left:692.5px;width:154.29999999999995px;top:376.8px">1</div>
<div class="t dv" style="left:846.8px;width:130.56px;top:376.8px">0,000</div>
<div class="t dv" style="left:982.8599999999999px;width:130.56px;top:376.8px">0,004</div>
<div class="t dv" style="left:1118.92px;width:130.56px;top:376.8px">0,016</div>
<div class="t dv" style="left:1254.98px;width:130.56px;top:376.8px">0,064</div>
<div class="t dv" style="left:1391.04px;width:130.56px;top:376.8px">0,148</div>
<div class="t dv" style="left:1527.1px;width:130.56px;top:376.8px">0,275</div>
<div class="t dv" style="left:1663.1599999999999px;width:130.56px;top:376.8px">0,455</div>
<div class="t dv" style="left:1799.22px;width:130.56px;top:376.8px">1,074</div>
<div class="t dv" style="left:1935.28px;width:130.56px;top:376.8px">1,642</div>
<div class="t dv" style="left:2071.34px;width:130.56px;top:376.8px">2,706</div>
<div class="t dv" style="left:2207.3999999999996px;width:130.56px;top:376.8px">3,841</div>
<div class="t dv" style="left:2343.46px;width:130.56px;top:376.8px">5,412</div>
<div class="t dv" style="left:2479.52px;width:130.56px;top:376.8px">6,635</div>
<div class="t hb" style="left:692.5px;width:154.29999999999995px;top:411.8px">2</div>
<div class="t dv" style="left:846.8px;width:130.56px;top:411.8px">0,020</div>
<div class="t dv" style="left:982.8599999999999px;width:130.56px;top:411.8px">0,103</div>
<div class="t dv" style="left:1118.92px;width:130.56px;top:411.8px">0,211</div>
<div class="t dv" style="left:1254.98px;width:130.56px;top:411.8px">0,446</div>
<div class="t dv" style="left:1391.04px;width:130.56px;top:411.8px">0,713</div>
<div class="t dv" style="left:1527.1px;width:130.56px;top:411.8px">1,022</div>
<div class="t dv" style="left:1663.1599999999999px;width:130.56px;top:411.8px">1,386</div>
<div class="t dv" style="left:1799.22px;width:130.56px;top:411.8px">2,408</div>
<div class="t dv" style="left:1935.28px;width:130.56px;top:411.8px">3,219</div>
<div class="t dv" style="left:2071.34px;width:130.56px;top:411.8px">4,605</div>
<div class="t dv" style="left:2207.3999999999996px;width:130.56px;top:411.8px">5,991</div>
<div class="t dv" style="left:2343.46px;width:130.56px;top:411.8px">7,824</div>
<div class="t dv" style="left:2479.52px;width:130.56px;top:411.8px">9,210</div>
<div class="t hb" style="left:692.5px;width:154.29999999999995px;top:446.8px">3</div>
<div class="t dv" style="left:846.8px;width:130.56px;top:446.8px">0,115</div>
<div class="t dv" style="left:982.8599999999999px;width:130.56px;top:446.8px">0,352</div>
<div class="t dv" style="left:1118.92px;width:130.56px;top:446.8px">0,584</div>
<div class="t dv" style="left:1254.98px;width:130.56px;top:446.8px">1,005</div>
<div class="t dv" style="left:1391.04px;width:130.56px;top:446.8px">1,424</div>
<div class="t dv" style="left:1527.1px;width:130.56px;top:446.8px">1,869</div>
<div class="t dv" style="left:1663.1599999999999px;width:130.56px;top:446.8px">2,366</div>
<div class="t dv" style="left:1799.22px;width:130.56px;top:446.8px">3,665</div>
<div class="t dv" style="left:1935.28px;width:130.56px;top:446.8px">4,642</div>
<div class="t dv" style="left:2071.34px;width:130.56px;top:446.8px">6,251</div>
<div class="t dv" style="left:2207.3999999999996px;width:130.56px;top:446.8px">7,815</div>
<div class="t dv" style="left:2343.46px;width:130.56px;top:446.8px">9,837</div>
<div class="t dv" style="left:2479.52px;width:130.56px;top:446.8px">11,345</div>
<div class="t hb" style="left:692.5px;width:154.29999999999995px;top:481.8px">4</div>
<div class="t dv" style="left:846.8px;width:130.56px;top:481.8px">0,297</div>
<div class="t dv" style="left:982.8599999999999px;width:130.56px;top:481.8px">0,711</div>
<div class="t dv" style="left:1118.92px;width:130.56px;top:481.8px">1,064</div>
<div class="t dv" style="left:1254.98px;width:130.56px;top:481.8px">1,649</div>
<div class="t dv" style="left:1391.04px;width:130.56px;top:481.8px">2,195</div>
<div class="t dv" style="left:1527.1px;width:130.56px;top:481.8px">2,753</div>
<div class="t dv" style="left:1663.1599999999999px;width:130.56px;top:481.8px">3,357</div>
<div class="t dv" style="left:1799.22px;width:130.56px;top:481.8px">4,878</div>
<div class="t dv" style="left:1935.28px;width:130.56px;top:481.8px">5,989</div>
<div class="t dv" style="left:2071.34px;width:130.56px;top:481.8px">7,779</div>
<div class="t dv" style="left:2207.3999999999996px;width:130.56px;top:481.8px">9,488</div>
<div class="t dv" style="left:2343.46px;width:130.56px;top:481.8px">11,668</div>
<div class="t dv" style="left:2479.52px;width:130.56px;top:481.8px">13,277</div>
<div class="t hb" style="left:692.5px;width:154.29999999999995px;top:516.8px">5</div>
<div class="t dv" style="left:846.8px;width:130.56px;top:516.8px">0,554</div>
<div class="t dv" style="left:982.8599999999999px;width:130.56px;top:516.8px">1,145</div>
<div class="t dv" style="left:1118.92px;width:130.56px;top:516.8px">1,610</div>
<div class="t dv" style="left:1254.98px;width:130.56px;top:516.8px">2,343</div>
<div class="t dv" style="left:1391.04px;width:130.56px;top:516.8px">3,000</div>
<div class="t dv" style="left:1527.1px;width:130.56px;top:516.8px">3,656</div>
<div class="t dv" style="left:1663.1599999999999px;width:130.56px;top:516.8px">4,351</div>
<div class="t dv" style="left:1799.22px;width:130.56px;top:516.8px">6,064</div>
<div class="t dv" style="left:1935.28px;width:130.56px;top:516.8px">7,289</div>
<div class="t dv" style="left:2071.34px;width:130.56px;top:516.8px">9,236</div>
<div class="t dv" style="left:2207.3999999999996px;width:130.56px;top:516.8px">11,070</div>
<div class="t dv" style="left:2343.46px;width:130.56px;top:516.8px">13,388</div>
<div class="t dv" style="left:2479.52px;width:130.56px;top:516.8px">15,086</div>
<div class="t hb" style="left:692.5px;width:154.29999999999995px;top:551.8px">6</div>
<div class="t dv" style="left:846.8px;width:130.56px;top:551.8px">0,872</div>
<div class="t dv" style="left:982.8599999999999px;width:130.56px;top:551.8px">1,635</div>
<div class="t dv" style="left:1118.92px;width:130.56px;top:551.8px">2,204</div>
<div class="t dv" style="left:1254.98px;width:130.56px;top:551.8px">3,070</div>
<div class="t dv" style="left:1391.04px;width:130.56px;top:551.8px">3,828</div>
<div class="t dv" style="left:1527.1px;width:130.56px;top:551.8px">4,570</div>
<div class="t dv" style="left:1663.1599999999999px;width:130.56px;top:551.8px">5,348</div>
<div class="t dv" style="left:1799.22px;width:130.56px;top:551.8px">7,231</div>
<div class="t dv" style="left:1935.28px;width:130.56px;top:551.8px">8,558</div>
<div class="t dv" style="left:2071.34px;width:130.56px;top:551.8px">10,645</div>
<div class="t dv" style="left:2207.3999999999996px;width:130.56px;top:551.8px">12,592</div>
<div class="t dv" style="left:2343.46px;width:130.56px;top:551.8px">15,033</div>
<div class="t dv" style="left:2479.52px;width:130.56px;top:551.8px">16,812</div>
<div class="t hb" style="left:692.5px;width:154.29999999999995px;top:586.8px">7</div>
<div class="t dv" style="left:846.8px;width:130.56px;top:586.8px">1,239</div>
<div class="t dv" style="left:982.8599999999999px;width:130.56px;top:586.8px">2,167</div>
<div class="t dv" style="left:1118.92px;width:130.56px;top:586.8px">2,833</div>
<div class="t dv" style="left:1254.98px;width:130.56px;top:586.8px">3,822</div>
<div class="t dv" style="left:1391.04px;width:130.56px;top:586.8px">4,671</div>
<div class="t dv" style="left:1527.1px;width:130.56px;top:586.8px">5,493</div>
<div class="t dv" style="left:1663.1599999999999px;width:130.56px;top:586.8px">6,346</div>
<div class="t dv" style="left:1799.22px;width:130.56px;top:586.8px">8,383</div>
<div class="t dv" style="left:1935.28px;width:130.56px;top:586.8px">9,803</div>
<div class="t dv" style="left:2071.34px;width:130.56px;top:586.8px">12,017</div>
<div class="t dv" style="left:2207.3999999999996px;width:130.56px;top:586.8px">14,067</div>
<div class="t dv" style="left:2343.46px;width:130.56px;top:586.8px">16,622</div>
<div class="t dv" style="left:2479.52px;width:130.56px;top:586.8px">18,475</div>
<div class="t hb" style="left:692.5px;width:154.29999999999995px;top:621.8px">8</div>
<div class="t dv" style="left:846.8px;width:130.56px;top:621.8px">1,647</div>
<div class="t dv" style="left:982.8599999999999px;width:130.56px;top:621.8px">2,733</div>
<div class="t dv" style="left:1118.92px;width:130.56px;top:621.8px">3,490</div>
<div class="t dv" style="left:1254.98px;width:130.56px;top:621.8px">4,594</div>
<div class="t dv" style="left:1391.04px;width:130.56px;top:621.8px">5,527</div>
<div class="t dv" style="left:1527.1px;width:130.56px;top:621.8px">6,423</div>
<div class="t dv" style="left:1663.1599999999999px;width:130.56px;top:621.8px">7,344</div>
<div class="t dv" style="left:1799.22px;width:130.56px;top:621.8px">9,524</div>
<div class="t dv" style="left:1935.28px;width:130.56px;top:621.8px">11,030</div>
<div class="t dv" style="left:2071.34px;width:130.56px;top:621.8px">13,362</div>
<div class="t dv" style="left:2207.3999999999996px;width:130.56px;top:621.8px">15,507</div>
<div class="t dv" style="left:2343.46px;width:130.56px;top:621.8px">18,168</div>
<div class="t dv" style="left:2479.52px;width:130.56px;top:621.8px">20,090</div>
<div class="t hb" style="left:692.5px;width:154.29999999999995px;top:656.8px">9</div>
<div class="t dv" style="left:846.8px;width:130.56px;top:656.8px">2,088</div>
<div class="t dv" style="left:982.8599999999999px;width:130.56px;top:656.8px">3,325</div>
<div class="t dv" style="left:1118.92px;width:130.56px;top:656.8px">4,168</div>
<div class="t dv" style="left:1254.98px;width:130.56px;top:656.8px">5,380</div>
<div class="t dv" style="left:1391.04px;width:130.56px;top:656.8px">6,393</div>
<div class="t dv" style="left:1527.1px;width:130.56px;top:656.8px">7,357</div>
<div class="t dv" style="left:1663.1599999999999px;width:130.56px;top:656.8px">8,343</div>
<div class="t dv" style="left:1799.22px;width:130.56px;top:656.8px">10,656</div>
<div class="t dv" style="left:1935.28px;width:130.56px;top:656.8px">12,242</div>
<div class="t dv" style="left:2071.34px;width:130.56px;top:656.8px">14,684</div>
<div class="t dv" style="left:2207.3999999999996px;width:130.56px;top:656.8px">16,919</div>
<div class="t dv" style="left:2343.46px;width:130.56px;top:656.8px">19,679</div>
<div class="t dv" style="left:2479.52px;width:130.56px;top:656.8px">21,666</div>
<div class="t hb" style="left:692.5px;width:154.29999999999995px;top:691.8px">10</div>
<div class="t dv" style="left:846.8px;width:130.56px;top:691.8px">2,558</div>
<div class="t dv" style="left:982.8599999999999px;width:130.56px;top:691.8px">3,940</div>
<div class="t dv" style="left:1118.92px;width:130.56px;top:691.8px">4,865</div>
<div class="t dv" style="left:1254.98px;width:130.56px;top:691.8px">6,179</div>
<div class="t dv" style="left:1391.04px;width:130.56px;top:691.8px">7,267</div>
<div class="t dv" style="left:1527.1px;width:130.56px;top:691.8px">8,295</div>
<div class="t dv" style="left:1663.1599999999999px;width:130.56px;top:691.8px">9,342</div>
<div class="t dv" style="left:1799.22px;width:130.56px;top:691.8px">11,781</div>
<div class="t dv" style="left:1935.28px;width:130.56px;top:691.8px">13,442</div>
<div class="t dv" style="left:2071.34px;width:130.56px;top:691.8px">15,987</div>
<div class="t dv" style="left:2207.3999999999996px;width:130.56px;top:691.8px">18,307</div>
<div class="t dv" style="left:2343.46px;width:130.56px;top:691.8px">21,161</div>
<div class="t dv" style="left:2479.52px;width:130.56px;top:691.8px">23,209</div>
<div class="t hb" style="left:692.5px;width:154.29999999999995px;top:726.8px">11</div>
<div class="t dv" style="left:846.8px;width:130.56px;top:726.8px">3,053</div>
<div class="t dv" style="left:982.8599999999999px;width:130.56px;top:726.8px">4,575</div>
<div class="t dv" style="left:1118.92px;width:130.56px;top:726.8px">5,578</div>
<div class="t dv" style="left:1254.98px;width:130.56px;top:726.8px">6,989</div>
<div class="t dv" style="left:1391.04px;width:130.56px;top:726.8px">8,148</div>
<div class="t dv" style="left:1527.1px;width:130.56px;top:726.8px">9,237</div>
<div class="t dv" style="left:1663.1599999999999px;width:130.56px;top:726.8px">10,341</div>
<div class="t dv" style="left:1799.22px;width:130.56px;top:726.8px">12,899</div>
<div class="t dv" style="left:1935.28px;width:130.56px;top:726.8px">14,631</div>
<div class="t dv" style="left:2071.34px;width:130.56px;top:726.8px">17,275</div>
<div class="t dv" style="left:2207.3999999999996px;width:130.56px;top:726.8px">19,675</div>
<div class="t dv" style="left:2343.46px;width:130.56px;top:726.8px">22,618</div>
<div class="t dv" style="left:2479.52px;width:130.56px;top:726.8px">24,725</div>
<div class="t hb" style="left:692.5px;width:154.29999999999995px;top:761.8px">12</div>
<div class="t dv" style="left:846.8px;width:130.56px;top:761.8px">3,571</div>
<div class="t dv" style="left:982.8599999999999px;width:130.56px;top:761.8px">5,226</div>
<div class="t dv" style="left:1118.92px;width:130.56px;top:761.8px">6,304</div>
<div class="t dv" style="left:1254.98px;width:130.56px;top:761.8px">7,807</div>
<div class="t dv" style="left:1391.04px;width:130.56px;top:761.8px">9,034</div>
<div class="t dv" style="left:1527.1px;width:130.56px;top:761.8px">10,182</div>
<div class="t dv" style="left:1663.1599999999999px;width:130.56px;top:761.8px">11,340</div>
<div class="t dv" style="left:1799.22px;width:130.56px;top:761.8px">14,011</div>
<div class="t dv" style="left:1935.28px;width:130.56px;top:761.8px">15,812</div>
<div class="t dv" style="left:2071.34px;width:130.56px;top:761.8px">18,549</div>
<div class="t dv" style="left:2207.3999999999996px;width:130.56px;top:761.8px">21,026</div>
<div class="t dv" style="left:2343.46px;width:130.56px;top:761.8px">24,054</div>
<div class="t dv" style="left:2479.52px;width:130.56px;top:761.8px">26,217</div>
<div class="t hb" style="left:692.5px;width:154.29999999999995px;top:796.8px">13</div>
<div class="t dv" style="left:846.8px;width:130.56px;top:796.8px">4,107</div>
<div class="t dv" style="left:982.8599999999999px;width:130.56px;top:796.8px">5,892</div>
<div class="t dv" style="left:1118.92px;width:130.56px;top:796.8px">7,041</div>
<div class="t dv" style="left:1254.98px;width:130.56px;top:796.8px">8,634</div>
<div class="t dv" style="left:1391.04px;width:130.56px;top:796.8px">9,926</div>
<div class="t dv" style="left:1527.1px;width:130.56px;top:796.8px">11,129</div>
<div class="t dv" style="left:1663.1599999999999px;width:130.56px;top:796.8px">12,340</div>
<div class="t dv" style="left:1799.22px;width:130.56px;top:796.8px">15,119</div>
<div class="t dv" style="left:1935.28px;width:130.56px;top:796.8px">16,985</div>
<div class="t dv" style="left:2071.34px;width:130.56px;top:796.8px">19,812</div>
<div class="t dv" style="left:2207.3999999999996px;width:130.56px;top:796.8px">22,362</div>
<div class="t dv" style="left:2343.46px;width:130.56px;top:796.8px">25,471</div>
<div class="t dv" style="left:2479.52px;width:130.56px;top:796.8px">27,688</div>
<div class="t hb" style="left:692.5px;width:154.29999999999995px;top:831.8px">14</div>
<div class="t dv" style="left:846.8px;width:130.56px;top:831.8px">4,660</div>
<div class="t dv" style="left:982.8599999999999px;width:130.56px;top:831.8px">6,571</div>
<div class="t dv" style="left:1118.92px;width:130.56px;top:831.8px">7,790</div>
<div class="t dv" style="left:1254.98px;width:130.56px;top:831.8px">9,467</div>
<div class="t dv" style="left:1391.04px;width:130.56px;top:831.8px">10,821</div>
<div class="t dv" style="left:1527.1px;width:130.56px;top:831.8px">12,078</div>
<div class="t dv" style="left:1663.1599999999999px;width:130.56px;top:831.8px">13,339</div>
<div class="t dv" style="left:1799.22px;width:130.56px;top:831.8px">16,222</div>
<div class="t dv" style="left:1935.28px;width:130.56px;top:831.8px">18,151</div>
<div class="t dv" style="left:2071.34px;width:130.56px;top:831.8px">21,064</div>
<div class="t dv" style="left:2207.3999999999996px;width:130.56px;top:831.8px">23,685</div>
<div class="t dv" style="left:2343.46px;width:130.56px;top:831.8px">26,873</div>
<div class="t dv" style="left:2479.52px;width:130.56px;top:831.8px">29,141</div>
<div class="t hb" style="left:692.5px;width:154.29999999999995px;top:866.8px">15</div>
<div class="t dv" style="left:846.8px;width:130.56px;top:866.8px">5,229</div>
<div class="t dv" style="left:982.8599999999999px;width:130.56px;top:866.8px">7,261</div>
<div class="t dv" style="left:1118.92px;width:130.56px;top:866.8px">8,547</div>
<div class="t dv" style="left:1254.98px;width:130.56px;top:866.8px">10,307</div>
<div class="t dv" style="left:1391.04px;width:130.56px;top:866.8px">11,721</div>
<div class="t dv" style="left:1527.1px;width:130.56px;top:866.8px">13,030</div>
<div class="t dv" style="left:1663.1599999999999px;width:130.56px;top:866.8px">14,339</div>
<div class="t dv" style="left:1799.22px;width:130.56px;top:866.8px">17,322</div>
<div class="t dv" style="left:1935.28px;width:130.56px;top:866.8px">19,311</div>
<div class="t dv" style="left:2071.34px;width:130.56px;top:866.8px">22,307</div>
<div class="t dv" style="left:2207.3999999999996px;width:130.56px;top:866.8px">24,996</div>
<div class="t dv" style="left:2343.46px;width:130.56px;top:866.8px">28,259</div>
<div class="t dv" style="left:2479.52px;width:130.56px;top:866.8px">30,578</div>
<div class="t hb" style="left:692.5px;width:154.29999999999995px;top:901.8px">16</div>
<div class="t dv" style="left:846.8px;width:130.56px;top:901.8px">5,812</div>
<div class="t dv" style="left:982.8599999999999px;width:130.56px;top:901.8px">7,962</div>
<div class="t dv" style="left:1118.92px;width:130.56px;top:901.8px">9,312</div>
<div class="t dv" style="left:1254.98px;width:130.56px;top:901.8px">11,152</div>
<div class="t dv" style="left:1391.04px;width:130.56px;top:901.8px">12,624</div>
<div class="t dv" style="left:1527.1px;width:130.56px;top:901.8px">13,983</div>
<div class="t dv" style="left:1663.1599999999999px;width:130.56px;top:901.8px">15,338</div>
<div class="t dv" style="left:1799.22px;width:130.56px;top:901.8px">18,418</div>
<div class="t dv" style="left:1935.28px;width:130.56px;top:901.8px">20,465</div>
<div class="t dv" style="left:2071.34px;width:130.56px;top:901.8px">23,542</div>
<div class="t dv" style="left:2207.3999999999996px;width:130.56px;top:901.8px">26,296</div>
<div class="t dv" style="left:2343.46px;width:130.56px;top:901.8px">29,633</div>
<div class="t dv" style="left:2479.52px;width:130.56px;top:901.8px">32,000</div>
<div class="t hb" style="left:692.5px;width:154.29999999999995px;top:936.8px">17</div>
<div class="t dv" style="left:846.8px;width:130.56px;top:936.8px">6,408</div>
<div class="t dv" style="left:982.8599999999999px;width:130.56px;top:936.8px">8,672</div>
<div class="t dv" style="left:1118.92px;width:130.56px;top:936.8px">10,085</div>
<div class="t dv" style="left:1254.98px;width:130.56px;top:936.8px">12,002</div>
<div class="t dv" style="left:1391.04px;width:130.56px;top:936.8px">13,531</div>
<div class="t dv" style="left:1527.1px;width:130.56px;top:936.8px">14,937</div>
<div class="t dv" style="left:1663.1599999999999px;width:130.56px;top:936.8px">16,338</div>
<div class="t dv" style="left:1799.22px;width:130.56px;top:936.8px">19,511</div>
<div class="t dv" style="left:1935.28px;width:130.56px;top:936.8px">21,615</div>
<div class="t dv" style="left:2071.34px;width:130.56px;top:936.8px">24,769</div>
<div class="t dv" style="left:2207.3999999999996px;width:130.56px;top:936.8px">27,587</div>
<div class="t dv" style="left:2343.46px;width:130.56px;top:936.8px">30,995</div>
<div class="t dv" style="left:2479.52px;width:130.56px;top:936.8px">33,409</div>
<div class="t hb" style="left:692.5px;width:154.29999999999995px;top:971.8px">18</div>
<div class="t dv" style="left:846.8px;width:130.56px;top:971.8px">7,015</div>
<div class="t dv" style="left:982.8599999999999px;width:130.56px;top:971.8px">9,390</div>
<div class="t dv" style="left:1118.92px;width:130.56px;top:971.8px">10,865</div>
<div class="t dv" style="left:1254.98px;width:130.56px;top:971.8px">12,857</div>
<div class="t dv" style="left:1391.04px;width:130.56px;top:971.8px">14,440</div>
<div class="t dv" style="left:1527.1px;width:130.56px;top:971.8px">15,893</div>
<div class="t dv" style="left:1663.1599999999999px;width:130.56px;top:971.8px">17,338</div>
<div class="t dv" style="left:1799.22px;width:130.56px;top:971.8px">20,601</div>
<div class="t dv" style="left:1935.28px;width:130.56px;top:971.8px">22,760</div>
<div class="t dv" style="left:2071.34px;width:130.56px;top:971.8px">25,989</div>
<div class="t dv" style="left:2207.3999999999996px;width:130.56px;top:971.8px">28,869</div>
<div class="t dv" style="left:2343.46px;width:130.56px;top:971.8px">32,346</div>
<div class="t dv" style="left:2479.52px;width:130.56px;top:971.8px">34,805</div>
<div class="t hb" style="left:692.5px;width:154.29999999999995px;top:1006.8px">19</div>
<div class="t dv" style="left:846.8px;width:130.56px;top:1006.8px">7,633</div>
<div class="t dv" style="left:982.8599999999999px;width:130.56px;top:1006.8px">10,117</div>
<div class="t dv" style="left:1118.92px;width:130.56px;top:1006.8px">11,651</div>
<div class="t dv" style="left:1254.98px;width:130.56px;top:1006.8px">13,716</div>
<div class="t dv" style="left:1391.04px;width:130.56px;top:1006.8px">15,352</div>
<div class="t dv" style="left:1527.1px;width:130.56px;top:1006.8px">16,850</div>
<div class="t dv" style="left:1663.1599999999999px;width:130.56px;top:1006.8px">18,338</div>
<div class="t dv" style="left:1799.22px;width:130.56px;top:1006.8px">21,689</div>
<div class="t dv" style="left:1935.28px;width:130.56px;top:1006.8px">23,900</div>
<div class="t dv" style="left:2071.34px;width:130.56px;top:1006.8px">27,204</div>
<div class="t dv" style="left:2207.3999999999996px;width:130.56px;top:1006.8px">30,144</div>
<div class="t dv" style="left:2343.46px;width:130.56px;top:1006.8px">33,687</div>
<div class="t dv" style="left:2479.52px;width:130.56px;top:1006.8px">36,191</div>
<div class="t hb" style="left:692.5px;width:154.29999999999995px;top:1041.8px">20</div>
<div class="t dv" style="left:846.8px;width:130.56px;top:1041.8px">8,260</div>
<div class="t dv" style="left:982.8599999999999px;width:130.56px;top:1041.8px">10,851</div>
<div class="t dv" style="left:1118.92px;width:130.56px;top:1041.8px">12,443</div>
<div class="t dv" style="left:1254.98px;width:130.56px;top:1041.8px">14,578</div>
<div class="t dv" style="left:1391.04px;width:130.56px;top:1041.8px">16,266</div>
<div class="t dv" style="left:1527.1px;width:130.56px;top:1041.8px">17,809</div>
<div class="t dv" style="left:1663.1599999999999px;width:130.56px;top:1041.8px">19,337</div>
<div class="t dv" style="left:1799.22px;width:130.56px;top:1041.8px">22,775</div>
<div class="t dv" style="left:1935.28px;width:130.56px;top:1041.8px">25,038</div>
<div class="t dv" style="left:2071.34px;width:130.56px;top:1041.8px">28,412</div>
<div class="t dv" style="left:2207.3999999999996px;width:130.56px;top:1041.8px">31,410</div>
<div class="t dv" style="left:2343.46px;width:130.56px;top:1041.8px">35,020</div>
<div class="t dv" style="left:2479.52px;width:130.56px;top:1041.8px">37,566</div>
<div class="abs" style="left:1253.48px;top:1173.5px;width:139.06px;height:37px;border:2.500px solid #217346"></div>
<div class="abs" style="left:1386.04px;top:1204.0px;width:9px;height:9px;background:#217346;border:1px solid #fff;border-right:none;border-bottom:none"></div>
<div class="abs" style="left:2868.5px;top:215px;width:38.5px;height:1356.5px;background:#fff"></div>
<div class="abs" style="left:2871.0px;top:216px;width:33.500px;height:1354.5px;background:#f1f1f1;border-radius:17px"></div>
<div class="abs" style="left:2880px;top:249px;width:16px;height:1275px;background:#757575;border-radius:8px"></div>
<svg style="left:2878.500px;top:224px" width="19" height="14" viewBox="0 0 19 14"><path d="M9.500 1.500L17.500 12.500H1.500Z" fill="#757575" stroke="#757575" stroke-width="2" stroke-linejoin="round"/></svg>
<svg style="left:2878.500px;top:1549px" width="19" height="14" viewBox="0 0 19 14"><path d="M9.500 12.500L17.500 1.500H1.500Z" fill="#757575" stroke="#757575" stroke-width="2" stroke-linejoin="round"/></svg>
<div class="abs" style="left:639px;top:1571.5px;width:2268px;height:64.5px;background:linear-gradient(90deg,#e6efdf 0%,#e6efe0 50%,#e5eee6 100%)"></div>
<svg style="left:680px;top:1590px" width="14" height="24" viewBox="0 0 14 24"><path d="M12 2L2.500 12L12 22" fill="none" stroke="#9a9a9a" stroke-width="2" stroke-linecap="round" stroke-linejoin="round"/></svg>
<svg style="left:745px;top:1590px" width="14" height="24" viewBox="0 0 14 24"><path d="M2 2L11.500 12L2 22" fill="none" stroke="#8a8a8a" stroke-width="2" stroke-linecap="round" stroke-linejoin="round"/></svg>
<div class="abs" style="left:854.500px;top:1571.5px;width:293.500px;height:55px;background:#fff;border-radius:0 0 9px 9px;box-shadow:0 1px 2px rgba(0,0,0,.12)"></div>
<div class="t" id="tabn" style="left:875px;top:1584.500px;font-size:26px;letter-spacing:1.250px;color:#1b1b1b;-webkit-text-stroke:.55px #1b1b1b">Rozkład chi-kwadrat</div>
<div class="abs" style="left:871px;top:1615.500px;width:260px;height:5px;background:#217346;border-radius:1px"></div>
<div class="abs" style="left:1155px;top:1586px;width:2px;height:34px;background:#cfd4cc"></div>
<svg style="left:1240.500px;top:1590.500px" width="23" height="23" viewBox="0 0 23 23"><path d="M11.500 0V23M0 11.500H23" stroke="#8a8a8a" stroke-width="2" fill="none"/></svg>
<div class="abs" style="left:2006.500px;top:1593px;width:4.500px;height:4.500px;background:#222"></div><div class="abs" style="left:2006.500px;top:1601px;width:4.500px;height:4.500px;background:#222"></div><div class="abs" style="left:2006.500px;top:1609px;width:4.500px;height:4.500px;background:#222"></div>
<div class="abs" style="left:2041px;top:1585px;width:828px;height:34px;border-radius:17px;background:#f3f3f3"></div>
<div class="abs" style="left:2075px;top:1593.500px;width:752px;height:16.500px;border-radius:8.500px;background:#757575"></div>
<svg style="left:2051px;top:1592.500px" width="14" height="19" viewBox="0 0 14 19"><path d="M1.500 9.500L12.500 1.500V17.500Z" fill="#757575" stroke="#757575" stroke-width="2" stroke-linejoin="round"/></svg>
<svg style="left:2845px;top:1592.500px" width="14" height="19" viewBox="0 0 14 19"><path d="M12.500 9.500L1.500 1.500V17.500Z" fill="#757575" stroke="#757575" stroke-width="2" stroke-linejoin="round"/></svg>
</div></div>
<style>
.ch{font-size:27px;color:#444;text-align:center}
.rh{font-size:27px;color:#444;text-align:center}
.hb{font-size:26.700px;font-weight:bold;color:#000;text-align:center}
.dv{font-size:26.700px;color:#000;text-align:right}
</style>
<!-- taskbar -->
<div class="abs" style="left:0;top:1745px;width:2944px;height:95px;background:linear-gradient(90deg,#cdeacd 0%,#d0ebcd 30%,#d3ecd0 55%,#d4ecd4 75%,#d6ebe2 92%,#d3e8e6 100%);border-top:1.500px solid rgba(90,130,90,.55)"></div>
<!-- weather -->
<svg style="left:38px;top:1760px" width="60" height="58" viewBox="38 1760 60 58">
 <defs><linearGradient id="wcl" x1="0" y1="0" x2="0" y2="1"><stop offset="0" stop-color="#c9d6f4"/><stop offset=".6" stop-color="#a9bdea"/><stop offset="1" stop-color="#8ea6e0"/></linearGradient></defs>
 <circle cx="79" cy="1791" r="9" fill="#f08a3c"/>
 <path d="M51 1814.500a11.500 11.500 0 0 1 -1 -22.900a14.500 14.500 0 0 1 26.500 -2.500a12.800 12.800 0 0 1 11.500 12.700a12.700 12.700 0 0 1 -12.700 12.700Z" fill="url(#wcl)"/>
 <path d="M56.500 1776a13.400 13.400 0 0 1 13.400 -13.400H93.800V1789.600H69.900a13.400 13.400 0 0 1 -13.400 -13.600Z" fill="#f8fbf6"/>
</svg>
<div class="t" id="wtemp" style="left:65px;top:1765.200px;font-size:20.500px;color:#111">12°</div>
<!-- start -->
<svg style="left:477px;top:1771px" width="46" height="46" viewBox="0 0 46 46"><defs><linearGradient id="wing" x1="0" y1="0" x2="1" y2="1"><stop offset="0" stop-color="#55cdf6"/><stop offset=".5" stop-color="#1b9be8"/><stop offset="1" stop-color="#0a74d4"/></linearGradient></defs><path d="M2 0H22V22H0V2a2 2 0 0 1 2 -2ZM24 0H44a2 2 0 0 1 2 2V22H24ZM0 24H22V46H2a2 2 0 0 1 -2 -2ZM24 24H46V44a2 2 0 0 1 -2 2H24Z" fill="url(#wing)"/></svg>
<!-- search -->
<svg style="left:566px;top:1770px" width="48" height="48" viewBox="566 1770 48 48"><circle cx="587.500" cy="1790" r="15.500" fill="rgba(235,240,235,.75)" stroke="#262626" stroke-width="5"/><path d="M598.800 1801.600L609 1813.200" stroke="#262626" stroke-width="5.400" stroke-linecap="round"/></svg>
<!-- task view -->
<svg style="left:653px;top:1770px" width="50" height="46" viewBox="653 1770 50 46"><defs><linearGradient id="tv1" x1="0" y1="0" x2="0" y2="1"><stop offset="0" stop-color="#3c3c3c"/><stop offset="1" stop-color="#161616"/></linearGradient><linearGradient id="tv2" x1="0" y1="0" x2="1" y2="1"><stop offset="0" stop-color="#ffffff"/><stop offset="1" stop-color="#e4e4e4"/></linearGradient></defs><rect x="654" y="1782.700" width="36" height="32" rx="3" fill="url(#tv1)"/><rect x="666" y="1771" width="35.500" height="31" rx="3" fill="url(#tv2)" fill-opacity=".93"/><path d="M666 1782.700H687a3 3 0 0 1 3 3V1802H669a3 3 0 0 1 -3 -3Z" fill="#c8c8c8"/></svg>
<!-- edge -->
<svg style="left:742px;top:1769px" width="48" height="48.500" viewBox="0 0 48 48"><defs><linearGradient id="ed1" x1="0" y1="0" x2="0" y2="1"><stop offset="0" stop-color="#1e9de2"/><stop offset="1" stop-color="#0a62c2"/></linearGradient><linearGradient id="ed2" x1="0" y1=".3" x2="1" y2=".5"><stop offset="0" stop-color="#28a2ea"/><stop offset=".45" stop-color="#2fc0cf"/><stop offset=".8" stop-color="#4fd57a"/><stop offset="1" stop-color="#6be04c"/></linearGradient></defs>
<path d="M24 48C10 48 .5 38 .5 25.500C.5 17 7 11.500 15 11.500C20 11.500 23 13 25 15L20 21C18 24 18 29 20 33C23 38 29 40.500 35 40C39 39.500 42 38 44.500 36C42 43 34 48 24 48Z" fill="url(#ed1)"/>
<path d="M14.500 14C10 18 9 26 11 32C14 41 23 46.500 32 46C38 45 42.500 41 44.500 36C42 38 38 39.500 34 39.800C28 40 22 37 20 32C18 27 19 22 22 19.500C19 16.500 16.500 14.500 14.500 14Z" fill="#1457ae"/>
<path d="M1 27C-1 12 10 .5 24.500 .5C38 .5 48 10 48 21C48 30 41 34.500 34 34.500C30 34.500 27.500 33 28.500 31C29.500 29.500 31.500 28 31.500 25C31.500 20.500 27.500 17 22.500 17C14 17 6 22 3 32.500C2 31 1.300 29 1 27Z" fill="url(#ed2)"/>
</svg>
<!-- outlook -->
<svg style="left:828px;top:1758px" width="64" height="60" viewBox="828 1758 64 60"><defs><linearGradient id="ol1" x1="0" y1="0" x2="1" y2="0"><stop offset="0" stop-color="#26b2f4"/><stop offset=".6" stop-color="#3fa6f4"/><stop offset="1" stop-color="#9aa6f8"/></linearGradient><linearGradient id="ol2" x1="0" y1="0" x2="0" y2="1"><stop offset="0" stop-color="#1b6fdc"/><stop offset="1" stop-color="#1450b8"/></linearGradient></defs>
<path d="M835 1789L872 1782a4 4 0 0 1 4 4V1810.500a4.500 4.500 0 0 1 -4.500 4.500H839.500a4.500 4.500 0 0 1 -4.500 -4.500Z" fill="url(#ol1)"/>
<path d="M833.500 1784.500L852.500 1772.200a4 4 0 0 1 4.500 0L869 1780L846 1794Z" fill="#3ab6f6"/>
<path d="M838 1790L866 1776.500L876 1787V1790L850 1805Z" fill="#1d62d4"/>
<path d="M848 1797.500L872 1785.500L876 1790.500L856 1806Z" fill="#1a48ba"/>
<path d="M836 1805L864 1815H839.500a4.500 4.500 0 0 1 -4.500 -4.500Z" fill="#3ccaf8"/>
<rect x="830" y="1791" width="20" height="20" rx="4" fill="url(#ol2)"/><text x="840" y="1807.300" text-anchor="middle" font-family="Liberation Sans,sans-serif" font-weight="bold" font-size="17.500" fill="#fff">O</text>
<circle cx="872.300" cy="1775" r="15.200" fill="#62c6f6"/><rect x="862.500" y="1768" width="19.500" height="14" rx="2.500" fill="none" stroke="#0e2a3e" stroke-width="2.300"/><path d="M863 1770L872.300 1776.500L881.500 1770" fill="none" stroke="#0e2a3e" stroke-width="2.300"/></svg>
<!-- phone link -->
<svg style="left:916px;top:1758px" width="68" height="62" viewBox="916 1758 68 62"><defs><linearGradient id="pl1" x1="0" y1="0" x2="0" y2="1"><stop offset="0" stop-color="#1f8fe0"/><stop offset="1" stop-color="#0d6cc4"/></linearGradient></defs><rect x="920.500" y="1772" width="43" height="31" rx="2.500" fill="url(#pl1)"/><rect x="918" y="1802" width="48" height="3.800" rx="1.500" fill="#0b5cae"/><rect x="927.500" y="1776.500" width="20.500" height="38" rx="3" fill="#33b4ee"/><rect x="927.500" y="1786" width="20.500" height="9" fill="#5fcaf4"/><rect x="927.500" y="1803" width="20.500" height="11.500" rx="2.500" fill="#1a7bd0"/><rect x="932" y="1779" width="8" height="1.800" rx=".9" fill="#bfe9fb"/><rect x="940" y="1758.500" width="41" height="32.500" rx="16.200" fill="#4a8282"/></svg>
<div class="t" id="b23" style="left:940px;width:41px;top:1765.500px;text-align:center;font-size:19.500px;color:#fff">23</div>
<!-- facebook -->
<svg style="left:1005px;top:1768px" width="50" height="50" viewBox="0 0 50 50"><defs><linearGradient id="fb1" x1="0" y1="0" x2="0" y2="1"><stop offset="0" stop-color="#1aa2fb"/><stop offset="1" stop-color="#0867e6"/></linearGradient><clipPath id="fbc"><circle cx="25" cy="25" r="24.200"/></clipPath></defs><circle cx="25" cy="25" r="24.200" fill="url(#fb1)"/><text x="25.500" y="49" text-anchor="middle" font-family="Liberation Sans,sans-serif" font-weight="bold" font-size="52" fill="#fff" clip-path="url(#fbc)">f</text></svg>
<!-- slack -->
<svg style="left:1093px;top:1768px" width="50" height="50" viewBox="0 0 50 50"><circle cx="25" cy="25" r="23.700" fill="#f5f2ee" stroke="#b9b0a4" stroke-width=".8"/><g><rect x="18.500" y="8.500" width="5.600" height="14" rx="2.800" fill="#36c5f0"/><rect x="8.500" y="18.500" width="15.600" height="5.600" rx="2.800" fill="#36c5f0"/><rect x="26" y="8.500" width="5.600" height="15.600" rx="2.800" fill="#2eb67d"/><rect x="33.500" y="18.500" width="8" height="5.600" rx="2.800" fill="#2eb67d"/><rect x="26" y="26" width="15.600" height="5.600" rx="2.800" fill="#ecb22e"/><rect x="26" y="33.500" width="5.600" height="8" rx="2.800" fill="#ecb22e"/><rect x="18.500" y="26" width="5.600" height="15.600" rx="2.800" fill="#e01e5a"/><rect x="8.500" y="26" width="8" height="5.600" rx="2.800" fill="#e01e5a"/></g></svg>
<!-- word -->
<svg style="left:1181px;top:1770px" width="50" height="46" viewBox="1181 1770 50 46"><rect x="1193.300" y="1772" width="35.700" height="41.700" rx="2.500" fill="#41a5ee"/><rect x="1193.300" y="1782.400" width="35.700" height="10.500" fill="#2b7cd3"/><rect x="1193.300" y="1792.800" width="35.700" height="10.500" fill="#185abd"/><path d="M1193.300 1803.200H1229V1811.200a2.500 2.500 0 0 1 -2.500 2.500H1195.800a2.500 2.500 0 0 1 -2.500 -2.500Z" fill="#103f91"/><rect x="1182" y="1780" width="24.500" height="25" rx="2.500" fill="#185abd"/><text x="1194.200" y="1799.800" text-anchor="middle" font-family="Liberation Sans,sans-serif" font-weight="bold" font-size="18.500" fill="#fff">W</text></svg>
<!-- photoshop -->
<div class="abs" style="left:1272.500px;top:1770px;width:42.500px;height:41px;border-radius:8px;background:#001e36;box-shadow:0 1px 2px rgba(0,0,0,.3)"></div>
<div class="t" id="pst" style="left:1272.500px;width:42.500px;top:1779.500px;text-align:center;font-size:23.500px;font-weight:bold;color:#31a8ff;letter-spacing:-.5px">Ps</div>
<!-- trello -->
<svg style="left:1361px;top:1773px" width="42" height="40" viewBox="0 0 42 40"><rect x="1.200" y="1.200" width="39" height="37.600" rx="5.500" fill="#0f7abf" stroke="#fff" stroke-width="2.200"/><rect x="8.200" y="8" width="9.800" height="21.500" rx="1.800" fill="#fff"/><rect x="23.200" y="8" width="9.800" height="13" rx="1.800" fill="#fff"/></svg>
<!-- translate -->
<svg style="left:1446px;top:1769px" width="50" height="48" viewBox="1446 1769 50 48"><rect x="1471" y="1778.500" width="22" height="36.500" rx="2.500" fill="#dfe1e6" stroke="#c6c9cf" stroke-width=".8"/><path d="M1447.600 1772.500a2.500 2.500 0 0 1 2.500 -2.500H1468.500L1479 1807H1450.100a2.500 2.500 0 0 1 -2.500 -2.500Z" fill="#4c8bf5"/><path d="M1469.500 1807H1479L1473.500 1814.500Z" fill="#3b5fd0"/><text x="1451.500" y="1797" font-family="Liberation Sans,sans-serif" font-size="20" font-weight="bold" fill="#fff">G</text><text x="1474.500" y="1805" font-family="Noto Sans CJK SC,Liberation Sans,sans-serif" font-size="16" font-weight="bold" fill="#6b7078">文</text></svg>
<!-- explorer -->
<svg style="left:1534px;top:1771px" width="50" height="45" viewBox="1534 1771 50 45"><defs><linearGradient id="fe1" x1="0" y1="0" x2="0" y2="1"><stop offset="0" stop-color="#ffdf7e"/><stop offset="1" stop-color="#fbbf2c"/></linearGradient><linearGradient id="fe2" x1="0" y1="0" x2="0" y2="1"><stop offset="0" stop-color="#2fa4ee"/><stop offset="1" stop-color="#0b6fd0"/></linearGradient></defs><path d="M1535 1775a2.500 2.500 0 0 1 2.500 -2.500H1550.500L1554 1777H1535Z" fill="#e8a614"/><path d="M1535 1777H1580.500a2.500 2.500 0 0 1 2.500 2.500V1812a2.500 2.500 0 0 1 -2.500 2.500H1537.500a2.500 2.500 0 0 1 -2.500 -2.500Z" fill="url(#fe1)"/><path d="M1543 1814.500V1806a5 5 0 0 1 5 -5H1570a5 5 0 0 1 5 5V1814.500Z" fill="url(#fe2)"/><rect x="1549.500" y="1805.500" width="19" height="2.500" rx="1.200" fill="#0a4f9e"/></svg>
<!-- whatsapp -->
<svg style="left:1620px;top:1766px" width="54" height="54" viewBox="1620 1766 54 54"><path d="M1647.200 1770.500a21.300 21.300 0 1 1 -10.200 40L1624.800 1814.200L1628.800 1802.800A21.300 21.300 0 0 1 1647.200 1770.500Z" fill="none" stroke="#1f8a5c" stroke-width="4.800" stroke-linejoin="round"/><path d="M1639.800 1781.500c-1.800 .3 -3.300 2.300 -3.300 4.500c0 7.500 9 16.500 16.800 16.500c2.200 0 4.200 -1.600 4.500 -3.400c.1 -.8 -.3 -1.200 -.9 -1.500l-4.200 -2c-.7 -.3 -1.300 -.1 -1.700 .5l-1.300 1.800c-3.500 -1.500 -6.300 -4.300 -7.700 -7.700l1.700 -1.300c.6 -.5 .8 -1.100 .5 -1.800l-1.900 -4.200c-.4 -.9 -1.200 -1.600 -2.500 -1.400Z" fill="#1f8a5c"/></svg>
<!-- perplexity-like -->
<svg style="left:1710px;top:1768px" width="50" height="50" viewBox="0 0 50 50"><rect x=".8" y=".6" width="48.200" height="48.500" rx="9" fill="#050505"/><g><path d="M25 25L9.500 9.500V30Z" fill="#19a7c9"/><path d="M25 25L40.500 9.500V30Z" fill="#1fb6d6"/><path d="M25 25L9.500 30V42L25 32Z" fill="#148fb0"/><path d="M25 25L40.500 30V42L25 32Z" fill="#1698b8"/><path d="M25 25L14 15V25Z" fill="#38d0ea"/><path d="M25 25L36 15V25Z" fill="#38d0ea"/><path d="M25 5V45M8 25H42" stroke="#4fe0f4" stroke-width="1.400"/></g></svg>
<!-- spotify -->
<svg style="left:1798px;top:1768px" width="50" height="50" viewBox="0 0 50 50"><circle cx="25" cy="25" r="23.800" fill="#1fd460"/><path d="M10.500 18.500c9.500 -3 20.500 -2 29 3" fill="none" stroke="#0b2e16" stroke-width="4.600" stroke-linecap="round"/><path d="M12 26.500c8 -2.300 17 -1.500 24.500 2.800" fill="none" stroke="#0b2e16" stroke-width="3.900" stroke-linecap="round"/><path d="M13.500 33.800c6.500 -1.800 13.500 -1.200 19.500 2.200" fill="none" stroke="#0b2e16" stroke-width="3.300" stroke-linecap="round"/></svg>
<!-- notepad -->
<svg style="left:1890px;top:1768px" width="42" height="50" viewBox="1890 1768 42 50"><defs><linearGradient id="np1" x1="0" y1="0" x2="0" y2="1"><stop offset="0" stop-color="#6ccaf0"/><stop offset="1" stop-color="#3fa8e2"/></linearGradient></defs><rect x="1892.700" y="1812" width="36.200" height="5" rx="1" fill="#b4571a"/><rect x="1892.700" y="1806" width="36.200" height="6.500" fill="#f4f0ea"/><rect x="1892.700" y="1772.500" width="36.200" height="36.500" rx="2" fill="url(#np1)"/><g fill="#0d5f8e"><rect x="1897" y="1769" width="3.400" height="7" rx="1.700"/><rect x="1905" y="1769" width="3.400" height="7" rx="1.700"/><rect x="1913" y="1769" width="3.400" height="7" rx="1.700"/><rect x="1921" y="1769" width="3.400" height="7" rx="1.700"/><rect x="1899" y="1782" width="24" height="2.800" rx="1.400"/><rect x="1899" y="1790" width="24" height="2.800" rx="1.400"/><rect x="1899" y="1798" width="24" height="2.800" rx="1.400"/></g></svg>
<!-- snipping -->
<svg style="left:1974px;top:1768px" width="52" height="52" viewBox="1974 1768 52 52"><rect x="1975" y="1769" width="36" height="36" rx="5" fill="#eceef2"/><path d="M1981.500 1775.500H2003M1981.500 1775.500V1797" fill="none" stroke="#d63a1a" stroke-width="4" stroke-dasharray="5 2.800"/><path d="M2004 1780V1796.500a2 2 0 0 1 -2 2H1986" fill="none" stroke="#8d9099" stroke-width="4.500" stroke-linecap="round" stroke-linejoin="round"/><path d="M2004 1796L2013 1795.500M2003.500 1798L2001.500 1807" stroke="#8d9099" stroke-width="3" stroke-linecap="round"/><circle cx="2018" cy="1795" r="4.300" fill="#eaf6ff" stroke="#2f9be0" stroke-width="3"/><circle cx="2000.700" cy="1812" r="4.300" fill="#eaf6ff" stroke="#2f9be0" stroke-width="3"/></svg>
<!-- peek (active) -->
<div class="abs" style="left:2048.500px;top:1755px;width:76.500px;height:76.500px;border-radius:9px;background:rgba(255,255,255,.42);border:1px solid rgba(255,255,255,.35);box-shadow:0 1px 2px rgba(0,0,0,.08)"></div>
<svg style="left:2064px;top:1774px" width="46" height="42" viewBox="2064 1774 46 42"><defs><linearGradient id="pk2" x1="0" y1="0" x2="1" y2="1"><stop offset="0" stop-color="#ffe79c"/><stop offset="1" stop-color="#fbc53e"/></linearGradient></defs><path d="M2066 1778a2.300 2.300 0 0 1 2.300 -2.300H2079L2083 1780H2066Z" fill="#f2b02c"/><path d="M2066 1780H2105.400a2.300 2.300 0 0 1 2.300 2.300V1806.700a2.300 2.300 0 0 1 -2.300 2.300H2068.300a2.300 2.300 0 0 1 -2.300 -2.300Z" fill="url(#pk2)"/><circle cx="2084.300" cy="1795.600" r="8.600" fill="#ffe9a8" fill-opacity=".4" stroke="#1a1a1a" stroke-width="2.800"/><path d="M2078 1802L2067 1812.800" stroke="#1a1a1a" stroke-width="3" stroke-linecap="round"/></svg>
<div class="abs" style="left:2071px;top:1825px;width:32px;height:6px;border-radius:3px;background:#3f8a8a"></div>
<!-- running indicators -->
<div class="abs" style="left:759.7px;top:1825px;width:12px;height:5.500px;border-radius:3px;background:#82957b"></div>
<div class="abs" style="left:847.7px;top:1825px;width:12px;height:5.500px;border-radius:3px;background:#82957b"></div>
<div class="abs" style="left:1111.7px;top:1825px;width:12px;height:5.500px;border-radius:3px;background:#82957b"></div>
<div class="abs" style="left:1199.7px;top:1825px;width:12px;height:5.500px;border-radius:3px;background:#82957b"></div>
<div class="abs" style="left:1287.7px;top:1825px;width:12px;height:5.500px;border-radius:3px;background:#82957b"></div>
<div class="abs" style="left:1375.7px;top:1825px;width:12px;height:5.500px;border-radius:3px;background:#82957b"></div>
<div class="abs" style="left:1551.7px;top:1825px;width:12px;height:5.500px;border-radius:3px;background:#82957b"></div>
<div class="abs" style="left:1639.7px;top:1825px;width:12px;height:5.500px;border-radius:3px;background:#82957b"></div>
<div class="abs" style="left:1727.7px;top:1825px;width:12px;height:5.500px;border-radius:3px;background:#82957b"></div>
<div class="abs" style="left:1815.7px;top:1825px;width:12px;height:5.500px;border-radius:3px;background:#82957b"></div>
<div class="abs" style="left:1903.7px;top:1825px;width:12px;height:5.500px;border-radius:3px;background:#82957b"></div>
<div class="abs" style="left:1991.7px;top:1825px;width:12px;height:5.500px;border-radius:3px;background:#82957b"></div>
<!-- system tray -->
<svg style="left:2268px;top:1786px" width="22" height="14" viewBox="0 0 22 14"><path d="M1.800 12L11 2.500L20.200 12" fill="none" stroke="#0e2a1a" stroke-width="2.600" stroke-linecap="round" stroke-linejoin="round"/></svg>
<svg style="left:2325px;top:1778px" width="36" height="27" viewBox="2325 1778 36 27"><defs><linearGradient id="odg" x1="0" y1="0" x2="1" y2="1"><stop offset="0" stop-color="#8f8f8f"/><stop offset=".5" stop-color="#e8e8e8"/><stop offset="1" stop-color="#9a9a9a"/></linearGradient></defs><path d="M2334.500 1802a7 7 0 0 1 -1.300 -13.800a9.300 9.300 0 0 1 17.300 -1.300a8 8 0 0 1 2 15.100Z" fill="url(#odg)" stroke="#1a1a1a" stroke-width="1.800" stroke-linejoin="round"/></svg>
<svg style="left:2389px;top:1777px" width="36" height="36" viewBox="2389 1777 36 36"><g fill="#f4f6f4" stroke="#7c8c84" stroke-width="1.300"><rect x="2399.500" y="1780" width="5" height="12" rx="2.500"/><rect x="2391.500" y="1788" width="13" height="5" rx="2.500"/><rect x="2406.500" y="1780" width="5" height="13" rx="2.500"/><rect x="2412.500" y="1788" width="7" height="5" rx="2.500"/><rect x="2399.500" y="1795" width="5" height="13" rx="2.500"/><rect x="2391.500" y="1795" width="7" height="5" rx="2.500"/><rect x="2406.500" y="1795" width="13" height="5" rx="2.500"/></g><circle cx="2414" cy="1800" r="8.600" fill="#1cc4f0" stroke="#0e2a3a" stroke-width="1.800"/></svg>
<svg style="left:2454px;top:1775px" width="34" height="36" viewBox="0 0 34 36"><g fill="none" stroke="#1e5a50" stroke-width="2" stroke-linejoin="round"><path d="M17 2.500L30 8.500V17L17 11.500L4 17V8.500Z"/><path d="M17 33.500L4 27.500V19L17 24.500L30 19V27.500Z"/><path d="M4 12.500L1.500 18L4 23.500M30 12.500L32.500 18L30 23.500"/><path d="M17 11.500c.8 4 2.500 5.700 6.500 6.500c-4 .8 -5.700 2.500 -6.500 6.500c-.8 -4 -2.500 -5.700 -6.500 -6.500c4 -.8 5.700 -2.500 6.500 -6.500Z"/></g></svg>
<svg style="left:2521px;top:1776px" width="26" height="34" viewBox="0 0 26 34"><rect x="8" y="1.500" width="10" height="18.500" rx="5" fill="none" stroke="#1e5a50" stroke-width="2"/><path d="M3 15.500a10 10 0 0 0 20 0M13 25.500V32.500" fill="none" stroke="#1e5a50" stroke-width="2" stroke-linecap="round"/></svg>
<svg style="left:2582px;top:1779px" width="34" height="26" viewBox="0 0 34 26"><g fill="none" stroke="#0e1e16" stroke-width="2.400" stroke-linecap="round"><path d="M2 9.500a21 21 0 0 1 30 0"/><path d="M6.800 14.500a14.300 14.300 0 0 1 20.400 0"/><path d="M11.600 19.300a7.600 7.600 0 0 1 10.800 0"/></g><circle cx="17" cy="22.800" r="2.400" fill="#0e1e16"/></svg>
<svg style="left:2630px;top:1779px" width="34" height="28" viewBox="0 0 34 28"><path d="M2 9.500H7L14 3V25L7 18.500H2Z" fill="none" stroke="#0e1e16" stroke-width="2.200" stroke-linejoin="round"/><path d="M18.500 9.500a6 6 0 0 1 0 9M22.500 5.500a11.500 11.500 0 0 1 0 17" fill="none" stroke="#0e1e16" stroke-width="2.200" stroke-linecap="round"/><path d="M26.800 2a16.500 16.500 0 0 1 0 24" fill="none" stroke="#9fb5a6" stroke-width="2.200" stroke-linecap="round"/></svg>
<svg style="left:2678px;top:1775px" width="36" height="30" viewBox="0 0 36 30"><rect x="3" y="8.500" width="26.500" height="17" rx="3.500" fill="none" stroke="#0e1e16" stroke-width="2.300"/><path d="M30.500 13.500h1.300a1.700 1.700 0 0 1 1.700 1.700v3.600a1.700 1.700 0 0 1 -1.700 1.700h-1.300Z" fill="#0e1e16"/><path d="M10 12H26V22H6.500Z" fill="#0e1e16"/><path d="M8.500 .5L2 11.500H6.500L4 19L12.500 8H7.500L11.500 .5Z" fill="#0e1e16" stroke="#d3ecd3" stroke-width="1.200"/></svg>
<div class="t" id="clk" style="left:2700px;width:157.500px;top:1765.300px;text-align:right;font-size:23px;color:#0e1e16">15:27</div>
<div class="t" id="dat" style="left:2700px;width:157.500px;top:1796.800px;text-align:right;font-size:23px;color:#0e1e16">17.10.2025</div>
<svg style="left:2876px;top:1778px" width="26" height="30" viewBox="0 0 26 30"><path d="M13 1.500a9 9 0 0 1 9 9V17l2.300 4.800a.8 .8 0 0 1 -.7 1.200H2.400a.8 .8 0 0 1 -.7 -1.200L4 17V10.500a9 9 0 0 1 9 -9Z" fill="none" stroke="#0e1e16" stroke-width="2.100" stroke-linejoin="round"/><path d="M9.500 23.500a3.600 3.600 0 0 0 7 0" fill="none" stroke="#0e1e16" stroke-width="2.100"/></svg>
</div></body></html>
